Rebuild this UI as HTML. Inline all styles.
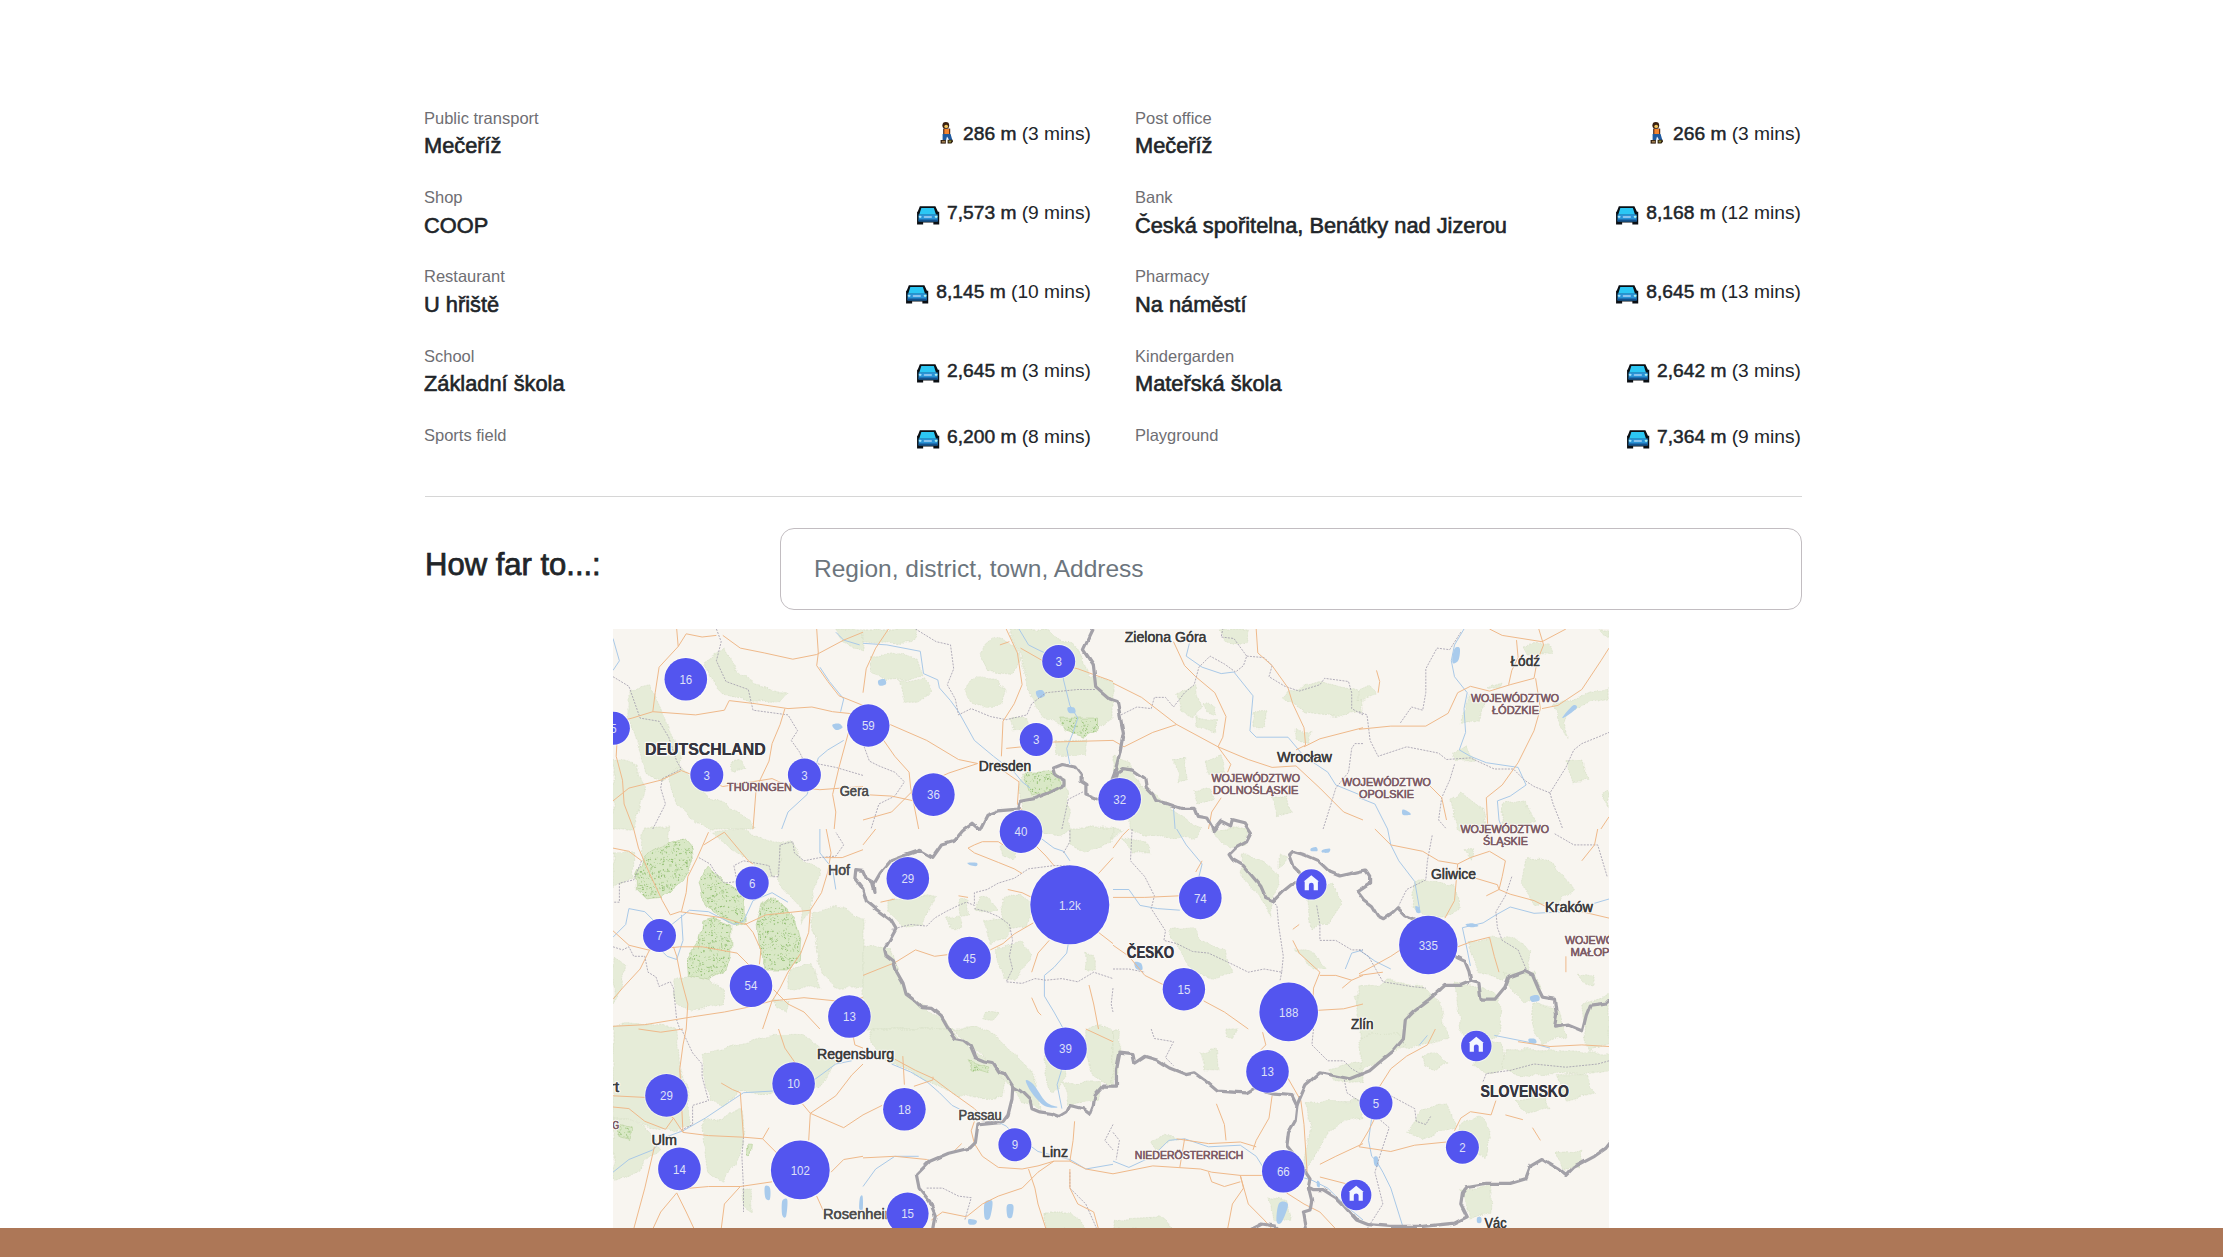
<!DOCTYPE html>
<html><head><meta charset="utf-8">
<style>
html,body{margin:0;padding:0;background:#fff;width:2223px;height:1257px;overflow:hidden;position:relative;font-family:"Liberation Sans",sans-serif;color:#212529}
.a{position:absolute;white-space:nowrap}
.lbl{font-size:16.5px;line-height:16.5px;color:#6e6e73}
.nm{font-size:21.8px;line-height:21.8px;font-weight:400;color:#212529;-webkit-text-stroke:0.6px #212529}
.ds{font-size:19.2px;line-height:19.2px;color:#212529;text-align:right}
.ds b{font-weight:400;-webkit-text-stroke:0.5px #212529}
.car{display:inline-block;vertical-align:-5.8px;margin-right:6.5px;margin-top:-8px}
.walk{display:inline-block;vertical-align:-4px;margin-right:9px;margin-top:-8px}
#sep{position:absolute;left:425px;top:496px;width:1377px;height:1px;background:#d6d6d6}
#hfar{font-size:31px;line-height:31px;font-weight:400;color:#212529;-webkit-text-stroke:0.75px #212529}
#inp{position:absolute;left:780px;top:528px;width:1020px;height:80px;border:1px solid #c2bdc1;border-radius:14px;box-sizing:content-box}
#ph{font-size:24.5px;line-height:24.5px;color:#6c757d}
#map{position:absolute;left:613px;top:629px;width:996px;height:599px;overflow:hidden;background:#f5f2ee}
#brown{position:absolute;left:0;top:1228px;width:2223px;height:29px;background:#ad7757}
</style></head><body>
<div class="a lbl" style="left:424px;top:110.03px">Public transport</div>
<div class="a nm" style="left:424px;top:135.35px">Mečeříž</div>
<div class="a ds" style="right:1132px;top:123.75px"><svg class="walk" width="14" height="23" viewBox="0 0 14 23"><circle cx="5.8" cy="4.4" r="3.4" fill="#3a2112"/><ellipse cx="6.2" cy="5.4" rx="1.9" ry="1.6" fill="#f2c65e"/><path d="M3.2 7.6H10.2V13.4H3.2Z" fill="#3a1a10"/><path d="M4.3 8.0H9.2V13.2H4.3Z" fill="#f5842e"/><path d="M2.6 13.0H10.6L12.4 19.2H9.4L7.0 15.6L6.0 19.4H2.6Z" fill="#1f5aa0"/><path d="M0.6 19.0H5.8V22.6H0.6Z" fill="#2a1808"/><path d="M1.8 19.8H5.0V21.6H1.8Z" fill="#a07d50"/><path d="M7.6 18.8H12.6L13.0 20.4L11.4 22.4H7.6Z" fill="#2a1808"/><path d="M8.6 19.4H11.6L10.8 21.4H8.6Z" fill="#8a8a3a"/></svg><b>286 m</b> (3 mins)</div>
<div class="a lbl" style="left:424px;top:189.23px">Shop</div>
<div class="a nm" style="left:424px;top:214.55px">COOP</div>
<div class="a ds" style="right:1132px;top:202.95px"><svg class="car" width="24.5" height="19" viewBox="0 0 23 18" preserveAspectRatio="none"><path d="M3.6 0.3H18.2L20.6 5.4H21.8V17.6H16.3V15.6H6.7V17.6H1.0V5.4H1.6Z" fill="#0b0f14"/><path d="M5.0 1.8H16.8L18.8 8.2H3.0Z" fill="#2cc7f4"/><path d="M2.4 8.0H20.4V14.6H2.4Z" fill="#2a93d6"/><path d="M2.4 12.8H20.4V14.6H2.4Z" fill="#14528f"/><ellipse cx="3.9" cy="10.3" rx="1.4" ry="1.0" fill="#9fe3fa"/><ellipse cx="18.9" cy="10.3" rx="1.4" ry="1.0" fill="#a8f0f0"/><rect x="7.2" y="9.6" width="7.8" height="1.5" rx="0.7" fill="#a9d4f6"/></svg><b>7,573 m</b> (9 mins)</div>
<div class="a lbl" style="left:424px;top:268.43px">Restaurant</div>
<div class="a nm" style="left:424px;top:293.75px">U hřiště</div>
<div class="a ds" style="right:1132px;top:282.15px"><svg class="car" width="24.5" height="19" viewBox="0 0 23 18" preserveAspectRatio="none"><path d="M3.6 0.3H18.2L20.6 5.4H21.8V17.6H16.3V15.6H6.7V17.6H1.0V5.4H1.6Z" fill="#0b0f14"/><path d="M5.0 1.8H16.8L18.8 8.2H3.0Z" fill="#2cc7f4"/><path d="M2.4 8.0H20.4V14.6H2.4Z" fill="#2a93d6"/><path d="M2.4 12.8H20.4V14.6H2.4Z" fill="#14528f"/><ellipse cx="3.9" cy="10.3" rx="1.4" ry="1.0" fill="#9fe3fa"/><ellipse cx="18.9" cy="10.3" rx="1.4" ry="1.0" fill="#a8f0f0"/><rect x="7.2" y="9.6" width="7.8" height="1.5" rx="0.7" fill="#a9d4f6"/></svg><b>8,145 m</b> (10 mins)</div>
<div class="a lbl" style="left:424px;top:347.63px">School</div>
<div class="a nm" style="left:424px;top:372.95px">Základní škola</div>
<div class="a ds" style="right:1132px;top:361.35px"><svg class="car" width="24.5" height="19" viewBox="0 0 23 18" preserveAspectRatio="none"><path d="M3.6 0.3H18.2L20.6 5.4H21.8V17.6H16.3V15.6H6.7V17.6H1.0V5.4H1.6Z" fill="#0b0f14"/><path d="M5.0 1.8H16.8L18.8 8.2H3.0Z" fill="#2cc7f4"/><path d="M2.4 8.0H20.4V14.6H2.4Z" fill="#2a93d6"/><path d="M2.4 12.8H20.4V14.6H2.4Z" fill="#14528f"/><ellipse cx="3.9" cy="10.3" rx="1.4" ry="1.0" fill="#9fe3fa"/><ellipse cx="18.9" cy="10.3" rx="1.4" ry="1.0" fill="#a8f0f0"/><rect x="7.2" y="9.6" width="7.8" height="1.5" rx="0.7" fill="#a9d4f6"/></svg><b>2,645 m</b> (3 mins)</div>
<div class="a lbl" style="left:424px;top:426.83px">Sports field</div>
<div class="a ds" style="right:1132px;top:427.25px"><svg class="car" width="24.5" height="19" viewBox="0 0 23 18" preserveAspectRatio="none"><path d="M3.6 0.3H18.2L20.6 5.4H21.8V17.6H16.3V15.6H6.7V17.6H1.0V5.4H1.6Z" fill="#0b0f14"/><path d="M5.0 1.8H16.8L18.8 8.2H3.0Z" fill="#2cc7f4"/><path d="M2.4 8.0H20.4V14.6H2.4Z" fill="#2a93d6"/><path d="M2.4 12.8H20.4V14.6H2.4Z" fill="#14528f"/><ellipse cx="3.9" cy="10.3" rx="1.4" ry="1.0" fill="#9fe3fa"/><ellipse cx="18.9" cy="10.3" rx="1.4" ry="1.0" fill="#a8f0f0"/><rect x="7.2" y="9.6" width="7.8" height="1.5" rx="0.7" fill="#a9d4f6"/></svg><b>6,200 m</b> (8 mins)</div>
<div class="a lbl" style="left:1135px;top:110.03px">Post office</div>
<div class="a nm" style="left:1135px;top:135.35px">Mečeříž</div>
<div class="a ds" style="right:422px;top:123.75px"><svg class="walk" width="14" height="23" viewBox="0 0 14 23"><circle cx="5.8" cy="4.4" r="3.4" fill="#3a2112"/><ellipse cx="6.2" cy="5.4" rx="1.9" ry="1.6" fill="#f2c65e"/><path d="M3.2 7.6H10.2V13.4H3.2Z" fill="#3a1a10"/><path d="M4.3 8.0H9.2V13.2H4.3Z" fill="#f5842e"/><path d="M2.6 13.0H10.6L12.4 19.2H9.4L7.0 15.6L6.0 19.4H2.6Z" fill="#1f5aa0"/><path d="M0.6 19.0H5.8V22.6H0.6Z" fill="#2a1808"/><path d="M1.8 19.8H5.0V21.6H1.8Z" fill="#a07d50"/><path d="M7.6 18.8H12.6L13.0 20.4L11.4 22.4H7.6Z" fill="#2a1808"/><path d="M8.6 19.4H11.6L10.8 21.4H8.6Z" fill="#8a8a3a"/></svg><b>266 m</b> (3 mins)</div>
<div class="a lbl" style="left:1135px;top:189.23px">Bank</div>
<div class="a nm" style="left:1135px;top:214.55px">Česká spořitelna, Benátky nad Jizerou</div>
<div class="a ds" style="right:422px;top:202.95px"><svg class="car" width="24.5" height="19" viewBox="0 0 23 18" preserveAspectRatio="none"><path d="M3.6 0.3H18.2L20.6 5.4H21.8V17.6H16.3V15.6H6.7V17.6H1.0V5.4H1.6Z" fill="#0b0f14"/><path d="M5.0 1.8H16.8L18.8 8.2H3.0Z" fill="#2cc7f4"/><path d="M2.4 8.0H20.4V14.6H2.4Z" fill="#2a93d6"/><path d="M2.4 12.8H20.4V14.6H2.4Z" fill="#14528f"/><ellipse cx="3.9" cy="10.3" rx="1.4" ry="1.0" fill="#9fe3fa"/><ellipse cx="18.9" cy="10.3" rx="1.4" ry="1.0" fill="#a8f0f0"/><rect x="7.2" y="9.6" width="7.8" height="1.5" rx="0.7" fill="#a9d4f6"/></svg><b>8,168 m</b> (12 mins)</div>
<div class="a lbl" style="left:1135px;top:268.43px">Pharmacy</div>
<div class="a nm" style="left:1135px;top:293.75px">Na náměstí</div>
<div class="a ds" style="right:422px;top:282.15px"><svg class="car" width="24.5" height="19" viewBox="0 0 23 18" preserveAspectRatio="none"><path d="M3.6 0.3H18.2L20.6 5.4H21.8V17.6H16.3V15.6H6.7V17.6H1.0V5.4H1.6Z" fill="#0b0f14"/><path d="M5.0 1.8H16.8L18.8 8.2H3.0Z" fill="#2cc7f4"/><path d="M2.4 8.0H20.4V14.6H2.4Z" fill="#2a93d6"/><path d="M2.4 12.8H20.4V14.6H2.4Z" fill="#14528f"/><ellipse cx="3.9" cy="10.3" rx="1.4" ry="1.0" fill="#9fe3fa"/><ellipse cx="18.9" cy="10.3" rx="1.4" ry="1.0" fill="#a8f0f0"/><rect x="7.2" y="9.6" width="7.8" height="1.5" rx="0.7" fill="#a9d4f6"/></svg><b>8,645 m</b> (13 mins)</div>
<div class="a lbl" style="left:1135px;top:347.63px">Kindergarden</div>
<div class="a nm" style="left:1135px;top:372.95px">Mateřská škola</div>
<div class="a ds" style="right:422px;top:361.35px"><svg class="car" width="24.5" height="19" viewBox="0 0 23 18" preserveAspectRatio="none"><path d="M3.6 0.3H18.2L20.6 5.4H21.8V17.6H16.3V15.6H6.7V17.6H1.0V5.4H1.6Z" fill="#0b0f14"/><path d="M5.0 1.8H16.8L18.8 8.2H3.0Z" fill="#2cc7f4"/><path d="M2.4 8.0H20.4V14.6H2.4Z" fill="#2a93d6"/><path d="M2.4 12.8H20.4V14.6H2.4Z" fill="#14528f"/><ellipse cx="3.9" cy="10.3" rx="1.4" ry="1.0" fill="#9fe3fa"/><ellipse cx="18.9" cy="10.3" rx="1.4" ry="1.0" fill="#a8f0f0"/><rect x="7.2" y="9.6" width="7.8" height="1.5" rx="0.7" fill="#a9d4f6"/></svg><b>2,642 m</b> (3 mins)</div>
<div class="a lbl" style="left:1135px;top:426.83px">Playground</div>
<div class="a ds" style="right:422px;top:427.25px"><svg class="car" width="24.5" height="19" viewBox="0 0 23 18" preserveAspectRatio="none"><path d="M3.6 0.3H18.2L20.6 5.4H21.8V17.6H16.3V15.6H6.7V17.6H1.0V5.4H1.6Z" fill="#0b0f14"/><path d="M5.0 1.8H16.8L18.8 8.2H3.0Z" fill="#2cc7f4"/><path d="M2.4 8.0H20.4V14.6H2.4Z" fill="#2a93d6"/><path d="M2.4 12.8H20.4V14.6H2.4Z" fill="#14528f"/><ellipse cx="3.9" cy="10.3" rx="1.4" ry="1.0" fill="#9fe3fa"/><ellipse cx="18.9" cy="10.3" rx="1.4" ry="1.0" fill="#a8f0f0"/><rect x="7.2" y="9.6" width="7.8" height="1.5" rx="0.7" fill="#a9d4f6"/></svg><b>7,364 m</b> (9 mins)</div>
<div id="sep"></div>
<div class="a" id="hfar" style="left:425px;top:549.2px">How far to...:</div>
<div id="inp"></div>
<div class="a" id="ph" style="left:814px;top:557.3px">Region, district, town, Address</div>
<div id="map"><svg width="996" height="599" viewBox="613 629 996 599" style="display:block;font-family:'Liberation Sans',sans-serif">
<rect x="613" y="629" width="996" height="599" fill="#f8f5f0"/>
<defs><pattern id="spk" width="24" height="24" patternUnits="userSpaceOnUse"><rect width="24" height="24" fill="#d9e8c6"/><g fill="#7fb35a" opacity="0.75"><circle cx="7.8" cy="3.6" r="0.64"/><circle cx="1.7" cy="12.9" r="0.51"/><circle cx="1.4" cy="12.2" r="0.37"/><circle cx="10.4" cy="1.7" r="0.39"/><circle cx="10.2" cy="19.8" r="0.41"/><circle cx="5.4" cy="15.1" r="0.78"/><circle cx="13.9" cy="9.5" r="0.79"/><circle cx="1.1" cy="20.6" r="0.48"/><circle cx="3.5" cy="2.8" r="0.49"/><circle cx="19.6" cy="4.3" r="0.61"/><circle cx="15.3" cy="8.9" r="0.60"/><circle cx="1.5" cy="1.4" r="0.44"/><circle cx="16.3" cy="10.3" r="0.49"/><circle cx="14.1" cy="10.9" r="0.48"/><circle cx="19.1" cy="16.8" r="0.46"/><circle cx="13.8" cy="12.6" r="0.74"/><circle cx="17.5" cy="6.9" r="0.79"/><circle cx="2.8" cy="10.0" r="0.69"/><circle cx="3.6" cy="11.7" r="0.37"/><circle cx="16.0" cy="18.3" r="0.61"/><circle cx="21.0" cy="7.5" r="0.66"/><circle cx="14.3" cy="13.9" r="0.56"/><circle cx="20.2" cy="22.7" r="0.56"/><circle cx="15.9" cy="1.5" r="0.67"/><circle cx="15.5" cy="23.8" r="0.72"/><circle cx="6.8" cy="9.3" r="0.65"/><circle cx="0.5" cy="11.1" r="0.43"/><circle cx="2.8" cy="1.4" r="0.70"/><circle cx="3.1" cy="5.9" r="0.53"/><circle cx="20.9" cy="1.9" r="0.55"/><circle cx="13.2" cy="21.2" r="0.72"/><circle cx="20.7" cy="6.7" r="0.54"/><circle cx="8.6" cy="21.2" r="0.78"/><circle cx="3.6" cy="4.2" r="0.45"/><circle cx="5.6" cy="11.6" r="0.62"/><circle cx="6.3" cy="0.1" r="0.54"/><circle cx="8.9" cy="13.6" r="0.78"/><circle cx="16.6" cy="12.4" r="0.63"/><circle cx="16.2" cy="1.3" r="0.75"/><circle cx="18.7" cy="21.0" r="0.71"/><circle cx="9.4" cy="9.6" r="0.40"/><circle cx="15.2" cy="1.5" r="0.38"/><circle cx="5.0" cy="3.9" r="0.50"/><circle cx="1.3" cy="0.0" r="0.42"/><circle cx="2.4" cy="8.7" r="0.36"/><circle cx="21.0" cy="14.7" r="0.42"/><circle cx="6.1" cy="8.3" r="0.51"/><circle cx="2.9" cy="20.4" r="0.80"/><circle cx="11.2" cy="11.6" r="0.39"/><circle cx="2.5" cy="8.2" r="0.47"/><circle cx="19.9" cy="3.9" r="0.36"/><circle cx="22.8" cy="12.7" r="0.42"/><circle cx="13.0" cy="0.6" r="0.59"/><circle cx="23.5" cy="20.7" r="0.66"/><circle cx="6.3" cy="8.8" r="0.43"/><circle cx="18.5" cy="12.8" r="0.70"/><circle cx="7.9" cy="5.4" r="0.72"/><circle cx="23.6" cy="20.5" r="0.71"/><circle cx="19.6" cy="17.8" r="0.45"/><circle cx="12.4" cy="8.5" r="0.36"/><circle cx="0.7" cy="6.7" r="0.47"/><circle cx="16.6" cy="23.0" r="0.55"/><circle cx="22.5" cy="23.7" r="0.78"/><circle cx="8.8" cy="5.3" r="0.45"/><circle cx="4.7" cy="4.9" r="0.63"/><circle cx="21.6" cy="20.2" r="0.57"/><circle cx="15.7" cy="19.2" r="0.39"/><circle cx="15.9" cy="21.8" r="0.70"/><circle cx="18.0" cy="11.5" r="0.43"/><circle cx="18.9" cy="8.0" r="0.71"/></g></pattern><filter id="wob" x="-5%" y="-5%" width="110%" height="110%"><feTurbulence type="fractalNoise" baseFrequency="0.06" numOctaves="2" seed="3"/><feDisplacementMap in="SourceGraphic" scale="9" xChannelSelector="R" yChannelSelector="G"/></filter></defs>
<g filter="url(#wob)"><g fill="#e6ecd8" stroke="#d5ddc4" stroke-width="0.6" stroke-dasharray="2 1"><polygon points="628.9,689.5 649.6,684.7 660.7,708.6 668.7,732.4 679.8,756.3 681.4,772.2 660.7,780.2 644.8,772.2 636.9,740.4 628.9,716.5"/><polygon points="705.3,660.8 724.4,648.1 740.3,676.7 756.2,683.1 788.0,692.7 780.1,700.6 751.4,702.2 724.4,692.7 708.5,676.7"/><polygon points="679.8,765.9 708.5,796.1 740.3,812.0 756.2,829.0 708.5,829.0 676.7,804.0 668.7,780.2"/><polygon points="835.8,629.0 863.0,629.0 863.0,651.3 843.7,641.7"/><polygon points="729.2,762.7 740.3,761.1 745.1,769.0 733.9,772.2"/><polygon points="613.0,759.5 636.9,765.9 644.8,788.1 632.1,829.0 613.0,829.0"/><polygon points="872.5,657.6 891.6,652.9 917.1,659.2 921.9,673.6 902.8,679.9 886.9,681.5 872.5,670.4"/><polygon points="899.6,681.5 923.5,676.7 931.4,692.7 918.7,702.2 904.4,702.2"/><polygon points="964.8,689.5 974.4,676.7 995.1,678.3 1006.2,691.1 1003.0,703.8 987.1,708.6 971.2,702.2"/><polygon points="980.8,651.3 995.1,638.5 1014.2,643.3 1019.0,660.8 1014.2,673.6 987.1,670.4"/><polygon points="1011.0,629.0 1046.0,629.0 1077.8,648.1 1089.0,676.7 1113.0,681.5 1113.0,718.1 1098.5,727.7 1069.9,730.8 1042.8,716.5 1031.7,695.8 1022.1,667.2"/><polygon points="1020.5,772.2 1046.0,772.2 1065.1,780.2 1069.9,829.0 1061.9,835.9 1038.0,832.7 1022.1,829.0"/><polygon points="1011.0,718.1 1025.3,718.1 1028.5,729.3 1014.2,730.8"/><polygon points="1054.0,740.4 1089.0,740.4 1085.8,756.3 1057.1,756.3"/><polygon points="863.0,629.0 918.7,629.0 910.7,641.7 878.9,643.3 863.0,641.7"/><polygon points="1176.7,695.8 1195.7,684.7 1200.5,708.6 1192.6,718.1 1181.4,711.7"/><polygon points="1195.7,716.5 1216.4,721.3 1216.4,732.4 1197.3,726.1"/><polygon points="1202.1,705.4 1214.8,707.0 1216.4,714.9 1203.7,711.7"/><polygon points="1253.0,711.7 1265.8,711.7 1265.8,727.7 1253.0,727.7"/><polygon points="1281.7,697.4 1292.8,689.5 1319.9,681.5 1351.7,689.5 1363.0,692.7 1363.0,711.7 1335.8,716.5 1304.0,711.7 1288.0,702.2"/><polygon points="1205.3,761.1 1221.2,757.9 1224.4,772.2 1208.5,772.2"/><polygon points="1173.5,759.5 1184.6,759.5 1186.2,780.2 1176.7,781.8"/><polygon points="1192.6,789.7 1208.5,786.5 1214.8,800.9 1198.9,804.0"/><polygon points="1141.6,788.1 1157.6,796.1 1176.7,812.0 1202.1,829.0 1192.6,839.1 1144.8,835.9 1128.9,829.0 1128.9,804.0"/><polygon points="1272.1,796.1 1288.0,796.1 1291.2,812.0 1276.9,816.8"/><polygon points="1221.2,629.0 1248.3,629.0 1245.1,644.9 1224.4,641.7"/><polygon points="1296.0,730.8 1311.9,730.8 1308.7,743.6 1296.0,740.4"/><polygon points="1113.0,756.3 1128.9,761.1 1141.6,788.1 1122.5,804.0 1113.0,788.1"/><polygon points="1359.0,689.5 1371.7,684.7 1378.1,695.8 1359.0,700.6"/><polygon points="1459.3,724.5 1468.8,695.8 1483.1,703.8 1479.9,719.7"/><polygon points="1451.3,753.1 1467.2,746.8 1473.6,761.1 1454.5,762.7"/><polygon points="1522.9,644.9 1550.0,641.7 1553.1,654.5 1526.1,652.9"/><polygon points="1486.3,687.9 1502.2,683.1 1499.0,689.5"/><polygon points="1553.1,705.4 1581.8,695.8 1609.0,687.9 1609.0,697.4 1565.9,711.7 1565.9,740.4"/><polygon points="1449.7,799.3 1462.4,792.9 1483.1,808.8 1486.3,829.0 1457.7,829.0"/><polygon points="1502.2,804.0 1526.1,800.9 1534.0,820.0 1518.1,829.0 1502.2,829.0"/><polygon points="1565.9,759.5 1581.8,761.1 1588.2,780.2 1573.8,781.8"/><polygon points="1600.9,792.9 1609.0,789.7 1609.0,807.2"/><polygon points="1597.7,629.0 1609.0,629.0 1609.0,638.5"/><polygon points="643.2,829.0 668.7,829.0 667.1,841.7 644.8,856.1 641.6,860.8"/><polygon points="613.0,852.9 633.7,852.9 633.7,876.7 613.0,886.3"/><polygon points="711.7,832.2 740.3,829.0 780.1,844.9 778.5,876.7 764.2,876.7 748.3,860.8 724.4,844.9"/><polygon points="780.1,844.9 792.8,841.7 804.0,860.8 819.9,868.8 810.3,908.6 804.0,924.5 800.8,908.6 778.5,884.7"/><polygon points="811.9,911.7 835.8,905.4 863.0,918.1 863.0,988.1 835.8,988.1 819.9,972.2 815.1,940.4"/><polygon points="613.0,956.3 625.7,964.3 622.5,988.1 613.0,1004.0"/><polygon points="673.5,980.2 689.4,975.4 708.5,980.2 724.4,988.1 724.4,1004.0 692.6,1012.0 676.7,1004.0"/><polygon points="788.0,969.0 811.9,964.3 819.9,988.1 788.0,988.1"/><polygon points="772.1,1000.9 791.2,1000.9 788.0,1010.4 776.9,1008.8"/><polygon points="886.9,900.6 926.7,895.8 934.6,897.4 923.5,924.5 902.8,927.7 886.9,911.7"/><polygon points="863.0,945.2 891.6,946.8 902.8,988.1 918.7,1004.0 942.6,1020.0 952.1,1029.0 863.0,1029.0"/><polygon points="980.8,895.8 990.3,897.4 998.3,908.6 974.4,911.7"/><polygon points="982.4,921.3 1006.2,918.1 1012.6,930.8 1006.2,940.4 990.3,943.6"/><polygon points="995.1,949.9 1022.1,940.4 1030.1,956.3 1014.2,980.2 1003.0,980.2"/><polygon points="1001.4,899.0 1022.1,892.7 1031.7,905.4 1028.5,927.7 1011.0,930.8 1003.0,916.5"/><polygon points="1069.9,829.0 1113.0,829.0 1113.0,841.7 1085.8,852.9 1069.9,844.9"/><polygon points="945.7,918.1 958.5,914.9 961.7,927.7 948.9,927.7"/><polygon points="958.5,900.6 968.0,899.0 969.6,914.9 960.1,916.5"/><polygon points="1085.8,953.1 1095.3,953.1 1095.3,969.0 1085.8,967.4"/><polygon points="983.9,1012.0 998.3,1013.6 993.5,1021.6 983.9,1020.0"/><polygon points="999.9,844.9 1015.8,848.1 1012.6,860.8 1003.0,859.2"/><polygon points="1168.7,930.8 1192.6,927.7 1202.1,940.4 1224.4,949.9 1230.8,972.2 1216.4,978.6 1192.6,972.2 1179.8,953.1"/><polygon points="1240.3,852.9 1264.2,860.8 1280.1,876.7 1269.0,900.6 1272.1,916.5 1256.2,892.7 1240.3,873.6"/><polygon points="1307.1,895.8 1332.6,883.1 1340.6,905.4 1327.8,924.5 1311.9,927.7"/><polygon points="1211.7,829.0 1248.3,829.0 1246.7,844.9 1227.6,848.1 1214.8,838.5"/><polygon points="1122.5,835.4 1144.8,841.7 1151.2,852.9 1132.1,852.9"/><polygon points="1294.4,949.9 1311.9,949.9 1324.6,969.0 1313.5,969.0"/><polygon points="1280.1,852.9 1288.0,857.6 1280.1,868.8"/><polygon points="1113.0,829.0 1122.5,829.0 1113.0,838.5"/><polygon points="1354.9,997.7 1363.0,994.5 1363.0,1013.6"/><polygon points="1414.7,881.5 1430.6,879.9 1454.5,886.3 1460.8,908.6 1448.1,914.9 1425.8,918.1 1413.1,908.6"/><polygon points="1467.2,943.6 1494.3,937.2 1518.1,940.4 1530.9,949.9 1526.1,972.2 1502.2,980.2 1478.4,972.2"/><polygon points="1526.1,857.6 1550.0,860.8 1565.9,876.7 1573.8,889.5 1556.3,903.8 1534.0,905.4 1521.3,884.7"/><polygon points="1359.0,988.1 1390.8,981.8 1422.7,985.0 1441.7,1004.0 1448.1,1039.1 1406.7,1048.6 1359.0,1035.9"/><polygon points="1454.5,981.8 1486.3,988.1 1502.2,1004.0 1499.0,1035.9 1470.4,1043.8 1460.8,1029.0"/><polygon points="1502.2,972.2 1534.0,972.2 1542.0,996.1 1526.1,1004.0 1510.2,988.1"/><polygon points="1578.6,972.2 1597.7,975.4 1594.5,985.0 1581.8,981.8"/><polygon points="1534.0,1004.0 1557.9,1012.0 1565.9,1035.9 1542.0,1043.8 1530.9,1027.9"/><polygon points="1581.8,1004.0 1609.0,996.1 1609.0,1043.8 1589.7,1051.8 1585.0,1035.9"/><polygon points="1464.0,849.7 1473.6,849.7 1470.4,859.2"/><polygon points="613.0,1029.0 625.7,1022.6 652.8,1025.8 676.7,1029.0 679.8,1068.8 689.4,1100.6 689.4,1124.5 673.5,1130.8 644.8,1127.7 628.9,1118.1 613.0,1118.1"/><polygon points="702.1,1054.5 724.4,1048.1 772.1,1035.4 804.0,1035.4 835.8,1060.8 819.9,1089.5 772.1,1092.7 740.3,1092.7 724.4,1105.4 708.5,1100.6"/><polygon points="702.1,1121.3 724.4,1118.1 740.3,1108.6 743.5,1124.5 740.3,1153.1 724.4,1181.8 708.5,1172.2"/><polygon points="613.0,1118.1 628.9,1118.1 649.6,1132.4 660.7,1149.9 633.7,1172.2 613.0,1180.2"/><polygon points="740.3,1188.1 749.9,1188.1 751.4,1212.0 743.5,1204.0"/><polygon points="871.0,1029.0 950.5,1029.0 966.4,1044.9 990.3,1060.8 1006.2,1081.5 1003.0,1097.4 974.4,1099.0 942.6,1089.5 910.7,1070.4 886.9,1060.8 871.0,1044.9"/><polygon points="952.1,1029.0 990.3,1029.0 1006.2,1044.9 1030.1,1068.8 1038.0,1092.7 1041.2,1108.6 1022.1,1100.6 1006.2,1081.5 982.4,1052.9"/><polygon points="1046.0,1052.9 1061.9,1060.8 1066.7,1076.7 1054.0,1092.7 1042.8,1076.7"/><polygon points="1085.8,1029.0 1098.5,1022.6 1113.0,1029.0 1113.0,1084.7 1093.7,1076.7 1085.8,1052.9"/><polygon points="1061.9,1083.1 1101.7,1081.5 1098.5,1100.6 1069.9,1105.4"/><polygon points="1046.0,1212.0 1069.9,1212.0 1085.8,1229.0 1046.0,1229.0"/><polygon points="1200.5,1052.9 1216.4,1048.1 1218.0,1068.8 1205.3,1068.8"/><polygon points="1304.0,1105.4 1327.8,1100.6 1363.0,1100.6 1363.0,1116.5 1335.8,1124.5 1319.9,1148.4 1304.0,1172.2 1304.0,1156.3 1311.9,1124.5"/><polygon points="1151.2,1140.4 1163.9,1134.0 1176.7,1138.8 1157.6,1149.9"/><polygon points="1327.8,1068.8 1363.0,1060.8 1363.0,1081.5 1335.8,1083.1"/><polygon points="1224.4,1029.0 1235.5,1029.0 1233.9,1038.5 1227.6,1037.0"/><polygon points="1113.0,1221.6 1132.1,1218.4 1160.7,1216.8 1176.7,1229.0 1113.0,1229.0"/><polygon points="1269.0,1196.1 1288.0,1200.9 1291.2,1220.0 1272.1,1223.1"/><polygon points="1113.0,1029.0 1119.4,1029.0 1117.8,1076.7 1113.0,1084.7"/><polygon points="1359.0,1035.4 1398.8,1033.8 1403.6,1044.9 1382.9,1060.8 1359.0,1070.4"/><polygon points="1421.1,1057.6 1438.6,1052.9 1448.1,1060.8 1435.4,1070.4 1422.7,1065.6"/><polygon points="1457.7,1124.5 1479.9,1114.9 1491.1,1130.8 1486.3,1156.3 1470.4,1153.1 1459.3,1140.4"/><polygon points="1406.7,1132.4 1422.7,1108.6 1448.1,1103.8 1454.5,1124.5 1422.7,1140.4"/><polygon points="1473.6,1065.6 1486.3,1038.5 1502.2,1044.9 1505.4,1068.8 1486.3,1073.6"/><polygon points="1505.4,1049.7 1550.0,1049.7 1581.8,1052.9 1609.0,1052.9 1609.0,1070.4 1581.8,1076.7 1550.0,1073.6 1518.1,1076.7 1502.2,1068.8"/><polygon points="1515.0,1100.6 1542.0,1095.8 1550.0,1108.6 1526.1,1113.3"/><polygon points="1556.3,1076.7 1589.7,1076.7 1594.5,1092.7 1565.9,1100.6"/><polygon points="1460.8,1188.1 1489.5,1186.5 1491.1,1212.0 1470.4,1220.0"/><polygon points="1557.9,1153.1 1581.8,1149.9 1578.6,1169.0 1562.7,1169.0"/></g>
<g fill="url(#spk)" stroke="#b5cf98" stroke-width="0.6"><polygon points="1058.7,718.1 1098.5,718.1 1098.5,730.8 1085.8,737.2 1065.1,730.8"/><polygon points="1022.1,772.2 1054.0,772.2 1061.9,788.1 1030.1,796.1"/><polygon points="635.3,876.7 644.8,856.1 668.7,841.7 681.4,837.0 691.0,848.1 692.6,860.8 681.4,881.5 660.7,897.4 644.8,899.0 635.3,889.5"/><polygon points="698.9,881.5 708.5,865.6 716.4,873.6 724.4,881.5 737.1,889.5 745.1,897.4 745.1,921.3 733.9,924.5 724.4,918.1 713.3,911.7 702.1,895.8"/><polygon points="756.2,924.5 762.6,903.8 772.1,895.8 788.0,908.6 796.0,921.3 800.8,940.4 799.2,959.5 784.9,969.0 765.8,969.0 759.4,953.1"/><polygon points="687.8,956.3 698.9,940.4 702.1,921.3 714.8,918.1 730.8,924.5 730.8,937.2 730.8,956.3 724.4,972.2 708.5,980.2 689.4,975.4"/><polygon points="746.7,1145.2 751.4,1145.2 749.9,1156.3 746.7,1154.7"/><polygon points="619.4,1124.5 632.1,1127.7 628.9,1140.4 617.8,1137.2"/><polygon points="968.0,1060.8 990.3,1067.2 987.1,1073.6 971.2,1068.8"/></g></g>
<g fill="none" stroke="#a9c9e8" stroke-width="1.0" stroke-linejoin="round"><polyline points="819.9,667.2 829.4,681.5 843.7,699.0 840.6,711.7"/><polyline points="843.7,740.4 827.8,749.9 818.3,757.9 807.1,794.5 788.0,812.0 781.7,829.0"/><polyline points="835.8,632.2 843.7,640.1 859.7,644.9"/><polyline points="613.0,638.5 619.4,660.8 613.0,670.4"/><polyline points="863.0,643.3 886.9,644.9 920.3,651.3 923.5,673.6 937.8,679.9 939.4,687.9 950.5,700.6 958.5,711.7 974.4,740.4 993.5,756.3 1014.2,772.2 1022.1,781.8 1030.1,788.1"/><polyline points="1019.0,629.0 1028.5,644.9 1038.0,649.7 1061.9,660.8 1063.5,679.9 1069.9,705.4 1077.8,718.1 1073.1,732.4 1066.7,748.4 1069.9,764.3"/><polyline points="1189.4,643.3 1186.2,656.1 1202.1,667.2 1221.2,673.6 1233.9,672.0 1253.0,695.8 1249.9,730.8 1256.2,737.2 1288.0,737.2 1304.0,756.3 1327.8,772.2 1335.8,785.0 1363.0,796.1"/><polyline points="1173.5,808.8 1175.1,829.0"/><polyline points="1464.0,629.0 1454.5,644.9 1451.3,660.8 1454.5,676.7 1467.2,692.7 1464.0,708.6 1465.6,732.4 1459.3,749.9 1470.4,756.3 1486.3,762.7 1518.1,767.4 1526.1,785.0 1510.2,796.1 1497.4,800.9 1499.0,820.0 1502.2,829.0"/><polyline points="1359.0,797.7 1374.9,804.0 1387.6,829.0"/><polyline points="613.0,937.2 625.7,924.5 628.9,908.6 644.8,911.7 663.9,930.8 679.8,918.1 689.4,910.2 708.5,911.7 733.9,924.5 743.5,921.3 753.0,900.6 772.1,892.7 788.0,902.2"/><polyline points="681.4,914.9 683.0,940.4 676.7,959.5 667.1,956.3 660.7,949.9"/><polyline points="819.9,829.0 819.9,852.9 832.6,868.8 835.8,889.5"/><polyline points="1068.3,943.6 1066.7,953.1 1054.0,967.4 1044.4,975.4 1044.4,996.1 1054.0,1012.0 1063.5,1029.0"/><polyline points="1041.2,838.5 1054.0,848.1 1063.5,851.3 1069.9,860.8"/><polyline points="1176.7,829.0 1186.2,844.9 1202.1,864.0 1198.9,876.7"/><polyline points="1113.0,889.5 1128.9,889.5 1140.1,905.4 1157.6,908.6 1179.8,910.2"/><polyline points="1345.3,969.0 1351.7,953.1 1363.0,949.9"/><polyline points="1387.6,829.0 1390.8,844.9 1398.8,860.8 1414.7,881.5 1419.5,908.6"/><polyline points="1462.4,927.7 1483.1,922.9 1495.9,914.9 1510.2,907.0 1534.0,913.3 1565.9,911.7 1609.0,899.0"/><polyline points="1462.4,927.7 1467.2,949.9 1470.4,965.9"/><polyline points="1359.0,949.9 1374.9,961.1 1390.8,969.0"/><polyline points="613.0,1172.2 628.9,1159.5 652.8,1149.9 665.5,1137.2 683.0,1130.8 705.3,1118.1 724.4,1105.4 743.5,1092.7 772.1,1091.1 811.9,1081.5 835.8,1064.0 851.7,1060.8"/><polyline points="891.6,1064.0 910.7,1072.0 926.7,1081.5 939.4,1092.7 952.1,1105.4 971.2,1114.9 990.3,1118.1 1006.2,1126.1 1014.2,1134.0 1038.0,1151.5 1069.9,1159.5 1085.8,1169.0 1113.0,1164.3"/><polyline points="863.0,1186.5 875.7,1169.0 894.8,1156.3 918.7,1156.3"/><polyline points="1061.9,1068.8 1057.1,1084.7 1061.9,1108.6"/><polyline points="1113.0,1161.1 1128.9,1167.4 1152.8,1156.3 1168.7,1140.4 1184.6,1138.8 1208.5,1146.8 1240.3,1145.2 1256.2,1156.3 1264.2,1169.0 1284.9,1172.2 1311.9,1180.2 1327.8,1188.1 1343.7,1204.0 1363.0,1220.0"/><polyline points="1371.7,1118.1 1368.5,1140.4 1371.7,1156.3 1376.5,1161.1 1382.9,1172.2 1390.8,1188.1 1403.6,1229.0"/><polyline points="1419.5,1044.9 1427.4,1035.4"/><polyline points="1494.3,1035.4 1526.1,1041.7 1550.0,1048.1"/></g>
<g fill="#a9cbec"><path d="M832.3,724.9C832.7,723.8 837.0,723.2 838.7,723.6C840.3,724.0 842.9,726.4 842.5,727.4C842.0,728.5 837.8,730.4 836.1,730.0C834.4,729.5 831.9,725.9 832.3,724.9Z"/><path d="M878.3,680.4C879.1,679.3 883.4,678.5 884.6,679.1C885.9,679.8 886.8,683.2 885.9,684.2C885.1,685.3 880.8,686.1 879.5,685.5C878.3,684.9 877.4,681.5 878.3,680.4Z"/><path d="M1036.0,691.6C1036.6,690.3 1040.9,689.7 1042.3,690.3C1043.8,691.0 1045.5,694.2 1044.9,695.4C1044.3,696.7 1040.0,698.6 1038.5,698.0C1037.0,697.3 1035.3,692.9 1036.0,691.6Z"/><path d="M1067.6,707.6C1068.5,706.8 1072.7,706.8 1074.0,707.6C1075.3,708.5 1076.1,711.9 1075.3,712.7C1074.4,713.6 1070.2,713.6 1068.9,712.7C1067.6,711.9 1066.8,708.5 1067.6,707.6Z"/><path d="M1454.7,648.4C1456.0,646.7 1459.2,646.4 1459.8,648.4C1460.5,650.3 1459.6,657.3 1458.6,659.8C1457.5,662.4 1454.5,663.8 1453.5,663.6C1452.4,663.4 1452.0,661.1 1452.2,658.5C1452.4,656.0 1453.5,650.0 1454.7,648.4Z"/><path d="M1562.8,716.8C1564.0,714.9 1570.6,706.9 1573.0,705.4C1575.3,703.9 1578.0,706.0 1576.8,707.9C1575.5,709.8 1567.7,715.4 1565.3,716.8C1563.0,718.3 1561.5,718.8 1562.8,716.8Z"/><path d="M1402.8,809.6C1403.9,809.2 1407.9,811.3 1409.2,812.2C1410.5,813.0 1411.5,814.3 1410.5,814.7C1409.4,815.1 1404.1,815.6 1402.8,814.7C1401.6,813.9 1401.8,810.0 1402.8,809.6Z"/><path d="M967.7,862.8C968.8,862.4 975.1,862.2 976.6,862.8C978.1,863.3 977.7,865.5 976.6,866.0C975.6,866.4 971.7,865.9 970.3,865.3C968.8,864.8 966.6,863.2 967.7,862.8Z"/><path d="M1134.6,962.0C1135.5,961.2 1139.7,962.0 1141.0,963.3C1142.3,964.6 1143.1,968.8 1142.3,969.7C1141.4,970.5 1137.2,969.7 1135.9,968.4C1134.6,967.1 1133.8,962.9 1134.6,962.0Z"/><path d="M1311.0,848.3C1311.9,847.7 1315.1,846.6 1316.1,847.1C1317.2,847.5 1318.3,850.2 1317.4,850.9C1316.6,851.5 1312.1,851.3 1311.0,850.9C1310.0,850.5 1310.2,849.0 1311.0,848.3Z"/><path d="M1322.3,849.9C1323.6,849.3 1328.9,848.2 1330.0,848.7C1331.0,849.1 1330.0,851.8 1328.7,852.5C1327.4,853.1 1323.4,852.9 1322.3,852.5C1321.3,852.0 1321.1,850.6 1322.3,849.9Z"/><path d="M1465.6,924.6C1466.0,924.0 1471.1,923.2 1473.3,923.4C1475.4,923.6 1478.8,925.3 1478.4,925.9C1477.9,926.5 1472.8,927.4 1470.7,927.2C1468.6,927.0 1465.2,925.3 1465.6,924.6Z"/><path d="M1415.3,906.3C1415.8,905.4 1418.3,906.5 1419.2,907.5C1420.0,908.6 1420.9,911.8 1420.4,912.6C1420.0,913.5 1417.5,913.7 1416.6,912.6C1415.8,911.6 1414.9,907.1 1415.3,906.3Z"/><path d="M1530.4,996.6C1531.4,995.5 1536.5,994.7 1538.0,995.3C1539.5,995.9 1540.4,999.3 1539.3,1000.4C1538.2,1001.4 1533.1,1002.3 1531.7,1001.7C1530.2,1001.0 1529.3,997.6 1530.4,996.6Z"/><path d="M764.9,1186.5C765.6,1184.8 769.1,1185.7 769.9,1187.8C770.8,1189.9 770.7,1197.6 769.9,1199.3C769.2,1201.0 766.3,1200.1 765.5,1198.0C764.6,1195.9 764.1,1188.2 764.9,1186.5Z"/><path d="M782.2,1201.0C783.1,1198.5 786.7,1197.2 787.3,1199.8C788.0,1202.3 786.9,1213.8 786.1,1216.3C785.2,1218.8 782.9,1217.6 782.2,1215.0C781.6,1212.5 781.4,1203.6 782.2,1201.0Z"/><path d="M860.0,1197.5C860.5,1195.4 862.2,1194.1 862.6,1196.3C863.1,1198.4 863.2,1208.1 862.6,1210.3C862.1,1212.4 859.8,1211.1 859.3,1209.0C858.9,1206.9 859.4,1199.6 860.0,1197.5Z"/><path d="M1025.7,1080.5C1025.9,1079.0 1029.9,1080.7 1033.3,1084.3C1036.7,1087.9 1042.0,1098.3 1046.1,1102.1C1050.1,1106.0 1057.7,1106.6 1057.5,1107.2C1057.3,1107.9 1049.0,1108.3 1044.8,1106.0C1040.5,1103.6 1035.2,1097.5 1032.1,1093.2C1028.9,1089.0 1025.5,1082.0 1025.7,1080.5Z"/><path d="M984.7,1202.7C986.0,1199.9 991.5,1198.9 992.4,1201.4C993.2,1204.0 991.1,1215.2 989.8,1218.0C988.6,1220.7 985.6,1220.5 984.7,1218.0C983.9,1215.4 983.5,1205.5 984.7,1202.7Z"/><path d="M1007.0,1205.5C1007.9,1203.6 1012.5,1203.6 1013.3,1205.5C1014.2,1207.4 1013.0,1215.0 1012.1,1216.9C1011.1,1218.8 1008.5,1218.8 1007.6,1216.9C1006.8,1215.0 1006.0,1207.4 1007.0,1205.5Z"/><path d="M968.9,1219.1C970.2,1218.4 975.5,1219.5 976.5,1220.4C977.6,1221.2 976.5,1223.5 975.3,1224.2C974.0,1224.8 970.0,1225.0 968.9,1224.2C967.8,1223.3 967.6,1219.7 968.9,1219.1Z"/><path d="M1279.1,1203.3C1281.0,1200.5 1287.5,1201.3 1288.0,1204.5C1288.4,1207.7 1283.5,1219.6 1281.6,1222.3C1279.7,1225.1 1276.9,1224.3 1276.5,1221.1C1276.1,1217.9 1277.1,1206.0 1279.1,1203.3Z"/><path d="M1317.0,1181.0C1317.4,1180.3 1319.1,1181.2 1319.6,1182.2C1320.0,1183.3 1320.0,1186.7 1319.6,1187.3C1319.1,1188.0 1317.4,1187.1 1317.0,1186.1C1316.6,1185.0 1316.6,1181.6 1317.0,1181.0Z"/><path d="M1373.9,1157.3C1374.4,1156.1 1377.0,1155.9 1377.7,1157.3C1378.4,1158.8 1378.9,1165.0 1378.3,1166.3C1377.8,1167.5 1375.3,1166.5 1374.5,1165.0C1373.8,1163.5 1373.3,1158.6 1373.9,1157.3Z"/><path d="M1528.6,1039.0C1529.5,1038.4 1533.7,1038.4 1535.0,1039.0C1536.3,1039.7 1537.1,1042.2 1536.3,1042.8C1535.4,1043.5 1531.2,1043.5 1529.9,1042.8C1528.6,1042.2 1527.8,1039.7 1528.6,1039.0Z"/><path d="M1477.2,1217.4C1477.9,1216.6 1480.4,1216.6 1481.1,1217.4C1481.7,1218.3 1481.7,1221.7 1481.1,1222.5C1480.4,1223.4 1477.9,1223.4 1477.2,1222.5C1476.6,1221.7 1476.6,1218.3 1477.2,1217.4Z"/></g>
<g fill="none" stroke="#9f9aab" stroke-width="0.8" stroke-dasharray="2 1.2" stroke-linejoin="round"><polyline points="716.4,629.0 721.2,641.7 716.4,660.8 726.0,681.5 748.3,689.5 753.0,710.2 788.0,714.9 797.6,730.8 791.2,740.4 799.2,751.5 804.0,761.1 835.8,767.4 863.0,775.4"/><polyline points="613.0,676.7 628.9,686.3 640.1,718.1 659.1,721.3 668.7,737.2 676.7,761.1 681.4,769.0 662.3,778.6 660.7,788.1 665.5,804.0 652.8,829.0"/><polyline points="915.5,629.0 936.2,641.7 950.5,644.9 953.7,668.8 947.3,684.7 955.3,699.0 958.5,714.9 971.2,708.6 990.3,716.5 1006.2,719.7 1026.9,714.9 1031.7,703.8 1046.0,692.7 1077.8,689.5 1095.3,689.5"/><polyline points="863.0,743.6 869.4,761.1 878.9,765.9 894.8,772.2 904.4,781.8 894.8,796.1 878.9,804.0 871.0,829.0"/><polyline points="1061.9,829.0 1068.3,799.3 1084.2,791.3"/><polyline points="1121.0,714.9 1136.9,707.0 1151.2,708.6 1154.4,697.4 1165.5,697.4 1173.5,707.0 1184.6,692.7 1194.2,684.7 1198.9,667.2 1210.1,656.1 1224.4,664.0 1235.5,672.0 1243.5,665.6 1246.7,656.1 1233.9,638.5 1221.2,637.0 1222.8,629.0"/><polyline points="1246.7,656.1 1264.2,657.6 1272.1,665.6 1269.0,676.7 1284.9,686.3 1299.2,691.1 1319.9,684.7 1324.6,678.3 1348.5,681.5 1351.7,692.7 1351.7,708.6 1363.0,714.9"/><polyline points="1363.0,743.6 1354.9,743.6 1351.7,748.4 1348.5,772.2 1335.8,788.1 1331.0,804.0 1323.1,829.0"/><polyline points="1359.0,711.7 1367.0,714.9 1370.1,740.4 1378.1,756.3 1406.7,746.8 1438.6,753.1 1446.5,759.5 1470.4,757.9 1494.3,769.0 1513.4,769.0 1524.5,780.2 1534.0,786.5 1550.0,792.9 1557.9,780.2 1565.9,767.4 1573.8,749.9 1581.8,743.6 1597.7,737.2 1609.0,732.4"/><polyline points="1400.4,722.9 1411.5,707.0 1422.7,710.2 1425.8,692.7 1425.8,668.8 1437.0,648.1 1449.7,649.7 1460.8,632.2"/><polyline points="1454.5,764.3 1449.7,780.2 1441.7,797.7 1438.6,820.0 1446.5,829.0"/><polyline points="1550.0,792.9 1553.1,804.0 1559.5,820.0 1562.7,829.0"/><polyline points="641.6,860.8 633.7,879.9 619.4,883.1 619.4,902.2 613.0,902.2"/><polyline points="698.9,857.6 710.1,864.0 718.0,876.7 724.4,883.1 737.1,881.5 733.9,865.6 743.5,860.8 769.0,865.6 772.1,876.7 778.5,876.7 780.1,844.9 792.8,841.7 794.4,852.9 804.0,860.8 819.9,857.6 835.8,856.1 843.7,844.9 835.8,832.2"/><polyline points="613.0,946.8 622.5,949.9 628.9,946.8 633.7,956.3 644.8,956.3 648.0,972.2 656.0,977.0 659.1,986.5 670.3,981.8 673.5,988.1 676.7,1020.0 679.8,1029.0"/><polyline points="891.6,929.3 910.7,924.5 926.7,926.1 934.6,918.1 945.7,911.7 958.5,905.4 966.4,902.2 974.4,905.4 974.4,892.7 987.1,889.5 998.3,883.1 1014.2,878.3 1028.5,868.8 1054.0,865.6 1069.9,865.6"/><polyline points="974.4,908.6 987.1,911.7 998.3,916.5 1009.4,924.5 1012.6,940.4 1009.4,956.3 1012.6,969.0 1006.2,981.8 1022.1,983.4 1034.9,978.6 1046.0,980.2 1061.9,978.6 1077.8,981.8 1093.7,972.2 1113.0,978.6"/><polyline points="1063.5,852.9 1069.9,841.7 1069.9,829.0"/><polyline points="1113.0,988.1 1111.2,1004.0 1113.0,1012.0"/><polyline points="1132.1,829.0 1130.5,860.8 1144.8,876.7 1154.4,895.8 1151.2,908.6 1165.5,930.8 1163.9,940.4 1176.7,943.6 1192.6,951.5 1208.5,953.1 1232.4,964.3 1248.3,972.2 1264.2,969.0 1281.7,972.2 1283.3,956.3 1278.5,924.5 1276.9,905.4 1272.1,902.2"/><polyline points="1316.7,905.4 1319.9,924.5 1319.9,940.4 1335.8,940.4 1351.7,949.9 1363.0,949.9"/><polyline points="1113.0,969.0 1128.9,969.0 1144.8,972.2"/><polyline points="1281.7,972.2 1280.1,980.2"/><polyline points="1432.2,835.4 1427.4,860.8 1425.8,879.9 1406.7,889.5 1398.8,905.4"/><polyline points="1511.8,876.7 1505.4,895.8 1495.9,911.7 1497.4,927.7 1502.2,940.4 1518.1,949.9 1526.1,969.0"/><polyline points="1554.7,833.8 1573.8,844.9 1597.7,844.9 1607.2,876.7"/><polyline points="1359.0,949.9 1368.5,956.3 1382.9,981.8 1411.5,986.5 1425.8,988.1"/><polyline points="681.4,1029.0 692.6,1052.9 702.1,1064.0 702.1,1076.7 708.5,1100.6 692.6,1105.4 692.6,1124.5 679.8,1130.8"/><polyline points="743.5,1137.2 741.9,1156.3 743.5,1188.1 743.5,1212.0"/><polyline points="926.7,1188.1 942.6,1188.1 958.5,1196.1 971.2,1197.7 964.8,1220.0"/><polyline points="1113.0,1124.5 1104.9,1140.4 1113.0,1149.9"/><polyline points="1069.9,1172.2 1069.9,1188.1 1085.8,1204.0 1096.9,1229.0"/><polyline points="1151.2,1029.0 1154.4,1038.5 1173.5,1041.7 1167.1,1054.5 1165.5,1057.6 1173.5,1065.6"/><polyline points="1313.5,1029.0 1311.9,1044.9 1327.8,1060.8 1343.7,1060.8 1351.7,1068.8 1363.0,1075.1"/><polyline points="1113.0,1132.4 1119.4,1140.4 1116.2,1159.5"/><polyline points="1343.7,1076.7 1346.9,1092.7 1363.0,1103.8"/><polyline points="1390.8,1095.8 1414.7,1108.6 1416.3,1121.3 1425.8,1124.5 1430.6,1116.5"/><polyline points="1378.1,1118.1 1389.2,1127.7 1379.7,1156.3 1374.9,1172.2 1382.9,1204.0 1367.0,1229.0"/><polyline points="1483.1,1081.5 1486.3,1073.6 1510.2,1070.4 1534.0,1064.0 1565.9,1067.2 1597.7,1064.0 1609.0,1060.8"/></g>
<g fill="none" stroke="#efb98a" stroke-width="1.0" stroke-linejoin="round"><polyline points="676.7,629.0 678.2,646.5 659.1,667.2 655.2,692.7 652.8,711.7 632.1,718.1 613.0,722.9"/><polyline points="652.8,711.7 695.7,714.9 724.4,710.2 729.2,700.6 756.2,703.8 788.0,708.6 811.9,707.0 832.6,711.7 863.0,714.9"/><polyline points="722.8,635.4 740.3,648.1 764.2,652.9 792.8,659.2 816.7,654.5 843.7,640.1 863.0,632.2"/><polyline points="816.7,629.0 818.3,652.9 816.7,665.6 827.8,681.5 839.0,695.8 863.0,705.4"/><polyline points="784.9,708.6 780.1,724.5 772.1,743.6 769.0,761.1 756.2,788.1 753.0,829.0"/><polyline points="613.0,800.9 628.9,788.1 660.7,780.2 681.4,770.6 722.8,786.5 772.1,778.6 789.6,786.5 819.9,789.7 863.0,786.5"/><polyline points="617.8,727.7 616.2,756.3 622.5,780.2 624.1,804.0 633.7,829.0"/><polyline points="848.5,732.4 839.0,767.4 832.6,794.5 835.8,812.0 834.2,829.0"/><polyline points="678.2,646.5 686.2,633.8 702.1,637.0 716.4,635.4"/><polyline points="888.5,629.0 875.7,648.1 866.2,668.8 863.0,692.7"/><polyline points="890.1,724.5 926.7,740.4 958.5,759.5 977.6,763.5"/><polyline points="977.6,763.5 948.9,773.0 915.5,788.1 891.6,812.0 863.0,820.0"/><polyline points="883.7,740.4 894.8,756.3 909.1,772.2 910.7,788.1 918.7,829.0"/><polyline points="863.0,794.5 891.6,796.1 913.9,800.9"/><polyline points="1001.4,756.3 1003.0,721.3 1014.2,703.8 1022.1,684.7 1017.4,652.9 1006.2,629.0"/><polyline points="1006.2,748.4 1022.1,746.8 1054.0,742.0 1113.0,740.4"/><polyline points="1003.0,770.6 1019.0,781.8 1017.4,804.0 1022.1,810.4"/><polyline points="1020.5,648.1 1042.8,660.8 1077.8,668.8 1113.0,681.5"/><polyline points="999.9,644.9 1009.4,641.7"/><polyline points="1113.0,683.1 1141.6,697.4 1176.7,724.5 1218.0,746.8 1248.3,759.5 1272.1,767.4 1296.0,765.9 1319.9,788.1 1343.7,812.0 1363.0,820.0"/><polyline points="1113.0,740.4 1124.1,746.8 1152.8,732.4 1176.7,724.5"/><polyline points="1173.5,641.7 1184.6,665.6 1195.7,676.7 1214.8,692.7 1226.0,716.5 1222.8,737.2 1218.0,746.8 1230.8,764.3 1227.6,772.2"/><polyline points="1256.2,629.0 1257.8,652.9 1272.1,665.6 1288.0,687.9 1292.8,703.8 1304.0,727.7 1305.6,745.2 1296.0,749.9"/><polyline points="1304.0,746.8 1319.9,738.8 1363.0,727.7"/><polyline points="1221.2,797.7 1211.7,812.0 1208.5,829.0"/><polyline points="1359.0,729.3 1390.8,726.1 1425.8,726.1 1448.1,713.3 1457.7,692.7 1470.4,686.3 1489.5,691.1 1510.2,684.7 1534.0,678.3 1537.2,660.8 1543.6,644.9 1538.8,629.0"/><polyline points="1489.5,629.0 1502.2,635.4 1542.0,641.7 1565.9,629.0"/><polyline points="1535.6,678.3 1540.4,708.6 1534.0,730.8 1518.1,762.7 1502.2,785.0 1486.3,797.7 1487.9,829.0"/><polyline points="1542.0,708.6 1557.9,705.4 1581.8,689.5 1600.9,660.8 1609.0,648.1"/><polyline points="1508.6,684.7 1511.8,670.4 1518.1,657.6 1516.5,640.1"/><polyline points="1376.5,670.4 1379.7,681.5 1378.1,692.7"/><polyline points="1429.0,785.0 1441.7,797.7 1446.5,820.0"/><polyline points="1600.9,829.0 1609.0,816.8"/><polyline points="633.7,829.0 638.5,848.1 649.6,873.6 662.3,900.6 670.3,914.9 679.8,911.7 702.1,914.9 724.4,918.1 745.1,924.5 765.8,914.9 781.7,913.3 810.3,910.2 821.5,892.7 827.8,872.0 831.0,852.9 826.2,829.0"/><polyline points="613.0,930.8 628.9,945.2 648.0,949.9 679.8,946.8 702.1,946.8 737.1,953.1 745.1,961.1 751.4,967.4"/><polyline points="681.4,911.7 686.2,892.7 687.8,876.7 697.3,857.6 708.5,832.2"/><polyline points="649.6,949.9 640.1,969.0 622.5,988.1 613.0,999.3"/><polyline points="673.5,946.8 676.7,956.3 681.4,980.2 687.8,1004.0 686.2,1029.0"/><polyline points="745.1,922.9 753.0,932.4 761.0,949.9 759.4,964.3"/><polyline points="810.3,910.2 808.7,932.4 800.8,953.1 788.0,972.2 780.1,988.1 772.1,1000.9 762.6,1029.0"/><polyline points="613.0,1026.3 644.8,1024.7 692.6,1016.8 724.4,1012.0 748.3,1007.2 772.1,1000.9 804.0,997.7 835.8,1000.9 863.0,997.7"/><polyline points="773.7,989.7 788.0,1004.0 804.0,1012.0 819.9,1029.0"/><polyline points="863.0,849.7 842.2,857.6 824.6,857.6"/><polyline points="703.7,844.9 724.4,832.2 748.3,860.8 753.0,864.0"/><polyline points="613.0,848.1 628.9,851.3 641.6,860.8"/><polyline points="863.0,844.9 875.7,829.0"/><polyline points="968.0,848.1 974.4,844.9 982.4,841.7 998.3,841.7 1003.0,844.9"/><polyline points="968.0,848.1 974.4,852.9 998.3,862.4 1014.2,868.8 1022.1,873.6"/><polyline points="1036.5,846.5 1046.0,856.1 1054.0,865.6"/><polyline points="863.0,975.4 878.9,969.0 894.8,962.7 915.5,949.9 934.6,956.3 947.3,954.7"/><polyline points="990.3,949.9 1003.0,943.6 1014.2,934.0 1033.3,922.9"/><polyline points="1049.2,940.4 1038.0,953.1 1031.7,972.2"/><polyline points="1098.5,932.4 1113.0,943.6"/><polyline points="1098.5,873.6 1113.0,857.6"/><polyline points="1007.8,889.5 1022.1,892.7 1031.7,897.4"/><polyline points="1089.0,985.0 1093.7,1004.0 1098.5,1029.0"/><polyline points="880.5,902.2 894.8,899.0"/><polyline points="1031.7,997.7 1038.0,1012.0 1041.2,1015.2"/><polyline points="958.5,895.8 968.0,897.4"/><polyline points="1113.0,897.4 1144.8,897.4 1179.8,895.8"/><polyline points="1113.0,848.1 1122.5,835.4 1128.9,829.0"/><polyline points="1113.0,945.2 1128.9,956.3 1144.8,975.4 1163.9,985.0"/><polyline points="1203.7,1000.9 1224.4,1012.0 1248.3,1029.0"/><polyline points="1195.7,872.0 1202.1,860.8"/><polyline points="1292.8,940.4 1299.2,953.1 1319.9,972.2 1313.5,988.1 1311.9,1029.0"/><polyline points="1319.9,975.4 1335.8,975.4 1351.7,980.2 1363.0,975.4"/><polyline points="1316.7,1010.4 1343.7,1008.8 1363.0,1004.0"/><polyline points="1342.2,988.1 1351.7,980.2"/><polyline points="1292.8,929.3 1299.2,924.5"/><polyline points="1374.9,829.0 1390.8,844.9 1422.7,851.3 1438.6,860.8 1457.7,864.0 1470.4,857.6 1489.5,851.3 1505.4,860.8 1502.2,876.7 1499.0,889.5 1510.2,894.2 1534.0,900.6 1550.0,908.6 1581.8,911.7 1609.0,918.1"/><polyline points="1457.7,864.0 1454.5,900.6 1444.9,918.1"/><polyline points="1470.4,876.7 1497.4,884.7 1499.0,889.5 1486.3,895.8"/><polyline points="1359.0,973.8 1390.8,956.3 1400.4,949.9"/><polyline points="1457.7,946.8 1470.4,942.0 1489.5,937.2 1494.3,956.3 1499.0,972.2"/><polyline points="1581.8,860.8 1594.5,844.9 1597.7,829.0"/><polyline points="1565.9,956.3 1565.9,972.2"/><polyline points="1359.0,975.4 1382.9,972.2"/><polyline points="613.0,1095.8 644.8,1097.4 673.5,1118.1 683.0,1132.4 708.5,1135.6 743.5,1137.2 762.6,1138.8 776.9,1153.1 781.7,1156.3"/><polyline points="743.5,1137.2 740.3,1092.7 732.4,1089.5 721.2,1083.1"/><polyline points="762.6,1138.8 769.0,1127.7"/><polyline points="613.0,1107.0 628.9,1108.6 644.8,1121.3 665.5,1129.3 673.5,1118.1"/><polyline points="673.5,1189.7 708.5,1186.5 740.3,1186.5 772.1,1181.8"/><polyline points="676.7,1192.9 660.7,1212.0 652.8,1229.0"/><polyline points="676.7,1192.9 686.2,1212.0 694.2,1229.0"/><polyline points="802.4,1103.8 810.3,1113.3 835.8,1095.8 851.7,1075.1 863.0,1064.0"/><polyline points="810.3,1113.3 808.7,1140.4"/><polyline points="810.3,1113.3 843.7,1127.7 863.0,1114.9"/><polyline points="831.0,1172.2 843.7,1159.5 863.0,1156.3"/><polyline points="816.7,1196.1 823.1,1210.4"/><polyline points="778.5,1029.0 784.9,1048.1 796.0,1064.0"/><polyline points="683.0,1132.4 679.8,1068.8 683.0,1044.9 686.2,1029.0"/><polyline points="740.3,1186.5 724.4,1204.0 721.2,1229.0"/><polyline points="654.4,1146.8 644.8,1188.1 633.7,1229.0"/><polyline points="851.7,1029.0 854.9,1044.9 863.0,1048.1"/><polyline points="638.5,1029.0 660.7,1032.2 683.0,1029.0"/><polyline points="863.0,1114.9 882.1,1105.4"/><polyline points="863.0,1157.9 894.8,1156.3 926.7,1159.5 929.8,1161.1"/><polyline points="894.8,1059.2 915.5,1070.4 933.0,1078.3 952.1,1092.7 974.4,1108.6 983.9,1118.1"/><polyline points="913.9,1086.3 933.0,1079.9 933.0,1076.7"/><polyline points="974.4,1143.6 982.4,1156.3 998.3,1167.4 1022.1,1169.0 1038.0,1165.9 1054.0,1161.1 1069.9,1161.1 1085.8,1169.0 1113.0,1173.8"/><polyline points="1028.5,1169.0 1034.9,1188.1 1038.0,1204.0 1046.0,1229.0"/><polyline points="1054.0,1161.1 1038.0,1172.2 1022.1,1188.1 998.3,1196.1 982.4,1204.0 966.4,1216.8 942.6,1212.0 931.4,1220.0"/><polyline points="1069.9,1161.1 1073.1,1140.4 1074.6,1121.3"/><polyline points="1069.9,1169.0 1069.9,1188.1 1077.8,1204.0 1093.7,1212.0 1098.5,1229.0"/><polyline points="902.8,1056.1 904.4,1084.7"/><polyline points="1085.8,1029.0 1113.0,1041.7"/><polyline points="961.7,1143.6 953.7,1151.5"/><polyline points="974.4,1121.3 971.2,1130.8 974.4,1143.6"/><polyline points="1113.0,1173.8 1152.8,1165.9 1200.5,1169.0 1211.7,1172.2 1240.3,1175.4 1272.1,1175.4"/><polyline points="1176.7,1138.8 1208.5,1143.6 1240.3,1142.0 1256.2,1146.8"/><polyline points="1216.4,1103.8 1224.4,1124.5 1226.0,1140.4"/><polyline points="1272.1,1095.8 1269.0,1118.1 1256.2,1140.4 1253.0,1149.9"/><polyline points="1240.3,1175.4 1243.5,1188.1 1232.4,1204.0 1227.6,1229.0"/><polyline points="1240.3,1175.4 1248.3,1204.0 1264.2,1220.0 1272.1,1229.0"/><polyline points="1286.5,1192.9 1304.0,1204.0 1319.9,1212.0 1335.8,1229.0"/><polyline points="1288.0,1078.3 1300.8,1100.6 1304.0,1124.5 1307.1,1172.2"/><polyline points="1319.9,1164.3 1335.8,1156.3 1363.0,1143.6"/><polyline points="1319.9,1177.0 1363.0,1188.1"/><polyline points="1262.6,1032.2 1265.8,1044.9 1261.0,1049.7"/><polyline points="1208.5,1172.2 1211.7,1181.8 1224.4,1186.5 1240.3,1181.8"/><polyline points="1184.6,1138.8 1179.8,1167.4"/><polyline points="1379.7,1086.3 1390.8,1068.8 1406.7,1056.1 1427.4,1044.9 1435.4,1029.0"/><polyline points="1359.0,1146.8 1368.5,1130.8 1374.9,1118.1"/><polyline points="1359.0,1146.8 1390.8,1151.5 1414.7,1145.2 1446.5,1142.0 1462.4,1140.4"/><polyline points="1454.5,1130.8 1460.8,1118.1 1470.4,1111.7 1491.1,1114.9 1495.9,1100.6"/><polyline points="1518.1,1041.7 1550.0,1046.5 1581.8,1044.9 1609.0,1046.5"/><polyline points="1505.4,1114.9 1522.9,1119.7"/><polyline points="1532.5,1127.7 1540.4,1140.4"/></g>
<filter id="jag" x="-2%" y="-2%" width="104%" height="104%"><feTurbulence type="fractalNoise" baseFrequency="0.09" numOctaves="1" seed="11"/><feDisplacementMap in="SourceGraphic" scale="4" xChannelSelector="R" yChannelSelector="G"/></filter>
<g filter="url(#jag)">
<polygon points="855.8,869.6 862.8,870.4 866.3,878.3 872.4,881.8 875.0,891.4 874.1,883.6 880.3,873.0 890.8,860.8 904.8,855.5 920.5,850.3 932.8,857.3 941.5,845.0 953.8,841.5 962.5,831.0 973.0,823.2 980.0,829.3 987.0,815.3 997.6,810.9 1018.6,809.2 1020.3,801.3 1034.3,798.6 1050.0,792.5 1064.0,785.5 1064.0,780.3 1055.3,775.0 1053.6,768.0 1062.3,764.5 1074.8,767.0 1081.1,775.0 1081.1,781.4 1085.9,784.5 1085.9,794.1 1098.6,798.9 1108.0,795.0 1114.0,785.0 1117.7,771.8 1122.5,768.6 1133.6,770.2 1144.8,778.2 1146.4,787.7 1152.7,794.1 1155.9,800.5 1167.0,803.6 1181.4,808.4 1194.1,808.4 1197.3,816.4 1206.8,818.0 1211.6,826.0 1213.2,830.7 1221.2,821.1 1230.7,825.9 1232.3,819.6 1245.0,822.7 1251.4,832.3 1246.6,841.8 1235.5,848.2 1229.1,854.6 1232.3,859.3 1243.4,865.7 1251.4,875.2 1260.9,886.4 1265.7,897.5 1273.7,900.7 1283.2,891.2 1291.2,884.8 1297.5,883.2 1303.0,878.0 1299.1,872.0 1294.3,867.3 1289.6,854.6 1292.8,851.4 1303.9,854.6 1318.2,860.9 1329.8,871.9 1339.7,875.9 1365.6,870.0 1369.6,875.9 1369.6,883.9 1357.6,891.8 1363.6,899.8 1371.5,905.7 1377.5,915.7 1383.5,918.7 1393.4,911.7 1397.4,907.7 1405.4,915.7 1415.3,919.7 1430.0,935.0 1445.0,950.0 1457.0,957.5 1465.0,961.4 1469.0,971.4 1471.0,981.3 1461.0,985.3 1445.1,985.3 1429.2,999.2 1413.3,1011.2 1405.4,1019.1 1403.4,1039.0 1393.4,1050.9 1383.5,1058.9 1369.6,1070.8 1349.7,1078.8 1319.8,1072.8 1305.9,1084.7 1297.0,1105.0 1291.9,1094.5 1272.0,1092.8 1253.8,1087.8 1245.5,1092.8 1217.4,1091.1 1205.8,1081.2 1194.2,1072.9 1186.0,1074.6 1169.4,1068.0 1156.2,1059.7 1144.6,1056.4 1134.7,1063.0 1133.0,1054.7 1119.8,1053.1 1116.5,1069.6 1116.5,1086.2 1102.4,1086.2 1095.0,1094.5 1093.3,1106.0 1090.0,1114.3 1082.8,1108.7 1070.0,1105.5 1066.9,1111.9 1058.9,1116.6 1051.0,1113.5 1039.8,1111.9 1031.9,1108.7 1030.3,1100.7 1020.7,1091.2 1012.8,1086.4 1004.8,1073.7 998.4,1072.0 992.1,1062.5 984.1,1061.0 976.2,1057.8 971.4,1046.6 963.4,1040.3 955.5,1038.7 947.5,1027.5 941.2,1016.4 931.6,1008.4 922.0,1007.6 912.5,998.9 906.1,994.1 903.0,983.0 896.6,971.8 893.4,960.7 886.0,955.0 884.5,949.0 890.0,940.0 896.0,929.0 890.8,920.3 876.8,909.8 866.3,901.0 862.8,888.8 854.9,878.3" fill="none" stroke="#a3a1a8" stroke-width="3.2" stroke-linejoin="round"/>
<polyline points="1093.2,629.0 1083.4,649.6 1093.2,664.4 1095.7,686.6 1110.0,699.0 1117.3,701.4 1123.4,733.4 1119.7,753.1 1114.5,773.4 1110.0,785.0" fill="none" stroke="#a3a1a8" stroke-width="3.2" stroke-linejoin="round"/>
<polyline points="1012.8,1086.4 1012.0,1099.0 1008.0,1115.0 1003.2,1121.4 978.0,1123.8 975.4,1142.6 970.0,1148.0 948.6,1153.3 929.8,1161.3 916.4,1174.8 919.1,1188.2 929.8,1201.6 935.2,1215.0 932.5,1230.0" fill="none" stroke="#a3a1a8" stroke-width="3.2" stroke-linejoin="round"/>
<polyline points="1297.0,1105.0 1295.2,1121.0 1288.5,1132.5 1286.9,1145.7 1293.5,1154.0 1303.4,1168.9 1310.0,1178.8 1308.4,1187.1 1313.5,1189.7 1323.0,1189.7 1335.8,1197.7 1343.7,1205.6 1356.5,1220.0 1368.5,1224.7 1390.8,1226.3 1422.7,1226.3 1454.5,1223.1 1467.2,1216.8 1460.8,1204.0 1462.4,1192.9 1467.2,1186.5 1486.3,1183.4 1510.2,1183.4 1526.1,1178.6 1530.9,1165.9 1542.0,1159.5 1550.0,1164.3 1557.9,1169.0 1565.9,1175.4 1573.8,1167.4 1594.5,1156.3 1605.7,1148.4 1612.0,1140.4" fill="none" stroke="#a3a1a8" stroke-width="3.2" stroke-linejoin="round"/>
<polyline points="1308.4,1187.1 1311.7,1200.3 1310.0,1210.0 1303.4,1212.0 1306.7,1230.0" fill="none" stroke="#a3a1a8" stroke-width="3.2" stroke-linejoin="round"/>
<polyline points="1471.0,981.3 1478.9,983.3 1481.0,999.2 1494.9,999.2 1504.8,987.3 1508.8,977.3 1524.7,971.4 1532.6,975.4 1538.6,989.3 1542.6,997.2 1554.5,999.2 1556.5,1015.1 1554.5,1027.1 1568.4,1025.1 1582.4,1031.0 1586.3,1015.1 1590.3,1005.2 1606.2,1003.2 1612.0,997.2" fill="none" stroke="#a3a1a8" stroke-width="3.2" stroke-linejoin="round"/>
<polyline points="1250.0,1230.0 1262.0,1224.0 1275.0,1226.0 1280.0,1230.0" fill="none" stroke="#a3a1a8" stroke-width="3.2" stroke-linejoin="round"/>
</g>
<text x="1124.7" y="641.5" font-size="14" font-weight="400" fill="#3d3d3d" textLength="81.8" lengthAdjust="spacingAndGlyphs" stroke="#fbfaf7" stroke-width="2.5" paint-order="stroke" stroke-linejoin="round">Zielona Góra</text>
<text x="1124.7" y="641.5" font-size="14" font-weight="400" fill="#3d3d3d" textLength="81.8" lengthAdjust="spacingAndGlyphs" stroke="#3d3d3d" stroke-width="0.35">Zielona Góra</text>
<text x="1510.5" y="665.6" font-size="14" font-weight="400" fill="#3d3d3d" textLength="29.5" lengthAdjust="spacingAndGlyphs" stroke="#fbfaf7" stroke-width="2.5" paint-order="stroke" stroke-linejoin="round">Łódź</text>
<text x="1510.5" y="665.6" font-size="14" font-weight="400" fill="#3d3d3d" textLength="29.5" lengthAdjust="spacingAndGlyphs" stroke="#3d3d3d" stroke-width="0.35">Łódź</text>
<text x="645" y="755.1" font-size="16.5" font-weight="700" fill="#35353f" textLength="120.7" lengthAdjust="spacingAndGlyphs" stroke="#fbfaf7" stroke-width="2.5" paint-order="stroke" stroke-linejoin="round">DEUTSCHLAND</text>
<text x="645" y="755.1" font-size="16.5" font-weight="700" fill="#35353f" textLength="120.7" lengthAdjust="spacingAndGlyphs" stroke="#35353f" stroke-width="0.05">DEUTSCHLAND</text>
<text x="727" y="790.6" font-size="11" font-weight="400" fill="#7d5b65" textLength="64.9" lengthAdjust="spacingAndGlyphs" stroke="#fbfaf7" stroke-width="2.5" paint-order="stroke" stroke-linejoin="round">THÜRINGEN</text>
<text x="727" y="790.6" font-size="11" font-weight="400" fill="#7d5b65" textLength="64.9" lengthAdjust="spacingAndGlyphs" stroke="#7d5b65" stroke-width="0.45">THÜRINGEN</text>
<text x="839.7" y="795.6" font-size="14" font-weight="400" fill="#4d4d4d" textLength="29.1" lengthAdjust="spacingAndGlyphs" stroke="#fbfaf7" stroke-width="2.5" paint-order="stroke" stroke-linejoin="round">Gera</text>
<text x="839.7" y="795.6" font-size="14" font-weight="400" fill="#4d4d4d" textLength="29.1" lengthAdjust="spacingAndGlyphs" stroke="#4d4d4d" stroke-width="0.35">Gera</text>
<text x="978.8" y="770.7" font-size="14" font-weight="400" fill="#3a3a3a" textLength="52.3" lengthAdjust="spacingAndGlyphs" stroke="#fbfaf7" stroke-width="2.5" paint-order="stroke" stroke-linejoin="round">Dresden</text>
<text x="978.8" y="770.7" font-size="14" font-weight="400" fill="#3a3a3a" textLength="52.3" lengthAdjust="spacingAndGlyphs" stroke="#3a3a3a" stroke-width="0.35">Dresden</text>
<text x="828" y="875.2" font-size="14" font-weight="400" fill="#4d4d4d" textLength="22.0" lengthAdjust="spacingAndGlyphs" stroke="#fbfaf7" stroke-width="2.5" paint-order="stroke" stroke-linejoin="round">Hof</text>
<text x="828" y="875.2" font-size="14" font-weight="400" fill="#4d4d4d" textLength="22.0" lengthAdjust="spacingAndGlyphs" stroke="#4d4d4d" stroke-width="0.35">Hof</text>
<text x="1277" y="761.8" font-size="14" font-weight="400" fill="#3d3d3d" textLength="55.0" lengthAdjust="spacingAndGlyphs" stroke="#fbfaf7" stroke-width="2.5" paint-order="stroke" stroke-linejoin="round">Wrocław</text>
<text x="1277" y="761.8" font-size="14" font-weight="400" fill="#3d3d3d" textLength="55.0" lengthAdjust="spacingAndGlyphs" stroke="#3d3d3d" stroke-width="0.35">Wrocław</text>
<text x="1211.4" y="782" font-size="11" font-weight="400" fill="#7d5b65" textLength="88.6" lengthAdjust="spacingAndGlyphs" stroke="#fbfaf7" stroke-width="2.5" paint-order="stroke" stroke-linejoin="round">WOJEWÓDZTWO</text>
<text x="1211.4" y="782" font-size="11" font-weight="400" fill="#7d5b65" textLength="88.6" lengthAdjust="spacingAndGlyphs" stroke="#7d5b65" stroke-width="0.45">WOJEWÓDZTWO</text>
<text x="1213" y="793.8" font-size="11" font-weight="400" fill="#7d5b65" textLength="85.5" lengthAdjust="spacingAndGlyphs" stroke="#fbfaf7" stroke-width="2.5" paint-order="stroke" stroke-linejoin="round">DOLNOŚLĄSKIE</text>
<text x="1213" y="793.8" font-size="11" font-weight="400" fill="#7d5b65" textLength="85.5" lengthAdjust="spacingAndGlyphs" stroke="#7d5b65" stroke-width="0.45">DOLNOŚLĄSKIE</text>
<text x="1342" y="786.4" font-size="11" font-weight="400" fill="#7d5b65" textLength="89.0" lengthAdjust="spacingAndGlyphs" stroke="#fbfaf7" stroke-width="2.5" paint-order="stroke" stroke-linejoin="round">WOJEWÓDZTWO</text>
<text x="1342" y="786.4" font-size="11" font-weight="400" fill="#7d5b65" textLength="89.0" lengthAdjust="spacingAndGlyphs" stroke="#7d5b65" stroke-width="0.45">WOJEWÓDZTWO</text>
<text x="1359" y="798" font-size="11" font-weight="400" fill="#7d5b65" textLength="55.0" lengthAdjust="spacingAndGlyphs" stroke="#fbfaf7" stroke-width="2.5" paint-order="stroke" stroke-linejoin="round">OPOLSKIE</text>
<text x="1359" y="798" font-size="11" font-weight="400" fill="#7d5b65" textLength="55.0" lengthAdjust="spacingAndGlyphs" stroke="#7d5b65" stroke-width="0.45">OPOLSKIE</text>
<text x="1471" y="702" font-size="11" font-weight="400" fill="#7d5b65" textLength="88.0" lengthAdjust="spacingAndGlyphs" stroke="#fbfaf7" stroke-width="2.5" paint-order="stroke" stroke-linejoin="round">WOJEWÓDZTWO</text>
<text x="1471" y="702" font-size="11" font-weight="400" fill="#7d5b65" textLength="88.0" lengthAdjust="spacingAndGlyphs" stroke="#7d5b65" stroke-width="0.45">WOJEWÓDZTWO</text>
<text x="1492" y="713.7" font-size="11" font-weight="400" fill="#7d5b65" textLength="47.0" lengthAdjust="spacingAndGlyphs" stroke="#fbfaf7" stroke-width="2.5" paint-order="stroke" stroke-linejoin="round">ŁÓDZKIE</text>
<text x="1492" y="713.7" font-size="11" font-weight="400" fill="#7d5b65" textLength="47.0" lengthAdjust="spacingAndGlyphs" stroke="#7d5b65" stroke-width="0.45">ŁÓDZKIE</text>
<text x="1460.5" y="832.5" font-size="11" font-weight="400" fill="#7d5b65" textLength="88.5" lengthAdjust="spacingAndGlyphs" stroke="#fbfaf7" stroke-width="2.5" paint-order="stroke" stroke-linejoin="round">WOJEWÓDZTWO</text>
<text x="1460.5" y="832.5" font-size="11" font-weight="400" fill="#7d5b65" textLength="88.5" lengthAdjust="spacingAndGlyphs" stroke="#7d5b65" stroke-width="0.45">WOJEWÓDZTWO</text>
<text x="1483" y="844.9" font-size="11" font-weight="400" fill="#7d5b65" textLength="45.0" lengthAdjust="spacingAndGlyphs" stroke="#fbfaf7" stroke-width="2.5" paint-order="stroke" stroke-linejoin="round">ŚLĄSKIE</text>
<text x="1483" y="844.9" font-size="11" font-weight="400" fill="#7d5b65" textLength="45.0" lengthAdjust="spacingAndGlyphs" stroke="#7d5b65" stroke-width="0.45">ŚLĄSKIE</text>
<text x="1431" y="878.9" font-size="14" font-weight="400" fill="#3d3d3d" textLength="45.0" lengthAdjust="spacingAndGlyphs" stroke="#fbfaf7" stroke-width="2.5" paint-order="stroke" stroke-linejoin="round">Gliwice</text>
<text x="1431" y="878.9" font-size="14" font-weight="400" fill="#3d3d3d" textLength="45.0" lengthAdjust="spacingAndGlyphs" stroke="#3d3d3d" stroke-width="0.35">Gliwice</text>
<text x="1545" y="912" font-size="14" font-weight="400" fill="#3d3d3d" textLength="48.0" lengthAdjust="spacingAndGlyphs" stroke="#fbfaf7" stroke-width="2.5" paint-order="stroke" stroke-linejoin="round">Kraków</text>
<text x="1545" y="912" font-size="14" font-weight="400" fill="#3d3d3d" textLength="48.0" lengthAdjust="spacingAndGlyphs" stroke="#3d3d3d" stroke-width="0.35">Kraków</text>
<text x="1565" y="944" font-size="11" font-weight="400" fill="#7d5b65" textLength="88.0" lengthAdjust="spacingAndGlyphs" stroke="#fbfaf7" stroke-width="2.5" paint-order="stroke" stroke-linejoin="round">WOJEWÓDZTWO</text>
<text x="1565" y="944" font-size="11" font-weight="400" fill="#7d5b65" textLength="88.0" lengthAdjust="spacingAndGlyphs" stroke="#7d5b65" stroke-width="0.45">WOJEWÓDZTWO</text>
<text x="1570.4" y="955.6" font-size="11" font-weight="400" fill="#7d5b65" textLength="79.6" lengthAdjust="spacingAndGlyphs" stroke="#fbfaf7" stroke-width="2.5" paint-order="stroke" stroke-linejoin="round">MAŁOPOLSKIE</text>
<text x="1570.4" y="955.6" font-size="11" font-weight="400" fill="#7d5b65" textLength="79.6" lengthAdjust="spacingAndGlyphs" stroke="#7d5b65" stroke-width="0.45">MAŁOPOLSKIE</text>
<text x="1126.8" y="957.5" font-size="16.5" font-weight="700" fill="#35353f" textLength="47.4" lengthAdjust="spacingAndGlyphs" stroke="#fbfaf7" stroke-width="2.5" paint-order="stroke" stroke-linejoin="round">ČESKO</text>
<text x="1126.8" y="957.5" font-size="16.5" font-weight="700" fill="#35353f" textLength="47.4" lengthAdjust="spacingAndGlyphs" stroke="#35353f" stroke-width="0.05">ČESKO</text>
<text x="1351" y="1029.4" font-size="14" font-weight="400" fill="#3d3d3d" textLength="22.4" lengthAdjust="spacingAndGlyphs" stroke="#fbfaf7" stroke-width="2.5" paint-order="stroke" stroke-linejoin="round">Zlín</text>
<text x="1351" y="1029.4" font-size="14" font-weight="400" fill="#3d3d3d" textLength="22.4" lengthAdjust="spacingAndGlyphs" stroke="#3d3d3d" stroke-width="0.35">Zlín</text>
<text x="1480.6" y="1097.4" font-size="16.5" font-weight="700" fill="#35353f" textLength="88.4" lengthAdjust="spacingAndGlyphs" stroke="#fbfaf7" stroke-width="2.5" paint-order="stroke" stroke-linejoin="round">SLOVENSKO</text>
<text x="1480.6" y="1097.4" font-size="16.5" font-weight="700" fill="#35353f" textLength="88.4" lengthAdjust="spacingAndGlyphs" stroke="#35353f" stroke-width="0.05">SLOVENSKO</text>
<text x="1134.8" y="1159.4" font-size="11" font-weight="400" fill="#7d5b65" textLength="108.6" lengthAdjust="spacingAndGlyphs" stroke="#fbfaf7" stroke-width="2.5" paint-order="stroke" stroke-linejoin="round">NIEDERÖSTERREICH</text>
<text x="1134.8" y="1159.4" font-size="11" font-weight="400" fill="#7d5b65" textLength="108.6" lengthAdjust="spacingAndGlyphs" stroke="#7d5b65" stroke-width="0.45">NIEDERÖSTERREICH</text>
<text x="1484.6" y="1228" font-size="14" font-weight="400" fill="#3d3d3d" textLength="22.0" lengthAdjust="spacingAndGlyphs" stroke="#fbfaf7" stroke-width="2.5" paint-order="stroke" stroke-linejoin="round">Vác</text>
<text x="1484.6" y="1228" font-size="14" font-weight="400" fill="#3d3d3d" textLength="22.0" lengthAdjust="spacingAndGlyphs" stroke="#3d3d3d" stroke-width="0.35">Vác</text>
<text x="817" y="1058.9" font-size="14" font-weight="400" fill="#3d3d3d" textLength="77.0" lengthAdjust="spacingAndGlyphs" stroke="#fbfaf7" stroke-width="2.5" paint-order="stroke" stroke-linejoin="round">Regensburg</text>
<text x="817" y="1058.9" font-size="14" font-weight="400" fill="#3d3d3d" textLength="77.0" lengthAdjust="spacingAndGlyphs" stroke="#3d3d3d" stroke-width="0.35">Regensburg</text>
<text x="651.5" y="1144.7" font-size="14" font-weight="400" fill="#3d3d3d" textLength="25.5" lengthAdjust="spacingAndGlyphs" stroke="#fbfaf7" stroke-width="2.5" paint-order="stroke" stroke-linejoin="round">Ulm</text>
<text x="651.5" y="1144.7" font-size="14" font-weight="400" fill="#3d3d3d" textLength="25.5" lengthAdjust="spacingAndGlyphs" stroke="#3d3d3d" stroke-width="0.35">Ulm</text>
<text x="958.5" y="1120.3" font-size="14" font-weight="400" fill="#4d4d4d" textLength="43.2" lengthAdjust="spacingAndGlyphs" stroke="#fbfaf7" stroke-width="2.5" paint-order="stroke" stroke-linejoin="round">Passau</text>
<text x="958.5" y="1120.3" font-size="14" font-weight="400" fill="#4d4d4d" textLength="43.2" lengthAdjust="spacingAndGlyphs" stroke="#4d4d4d" stroke-width="0.35">Passau</text>
<text x="1042" y="1156.8" font-size="14" font-weight="400" fill="#3d3d3d" textLength="26.0" lengthAdjust="spacingAndGlyphs" stroke="#fbfaf7" stroke-width="2.5" paint-order="stroke" stroke-linejoin="round">Linz</text>
<text x="1042" y="1156.8" font-size="14" font-weight="400" fill="#3d3d3d" textLength="26.0" lengthAdjust="spacingAndGlyphs" stroke="#3d3d3d" stroke-width="0.35">Linz</text>
<text x="823" y="1219" font-size="14" font-weight="400" fill="#4d4d4d" textLength="74.0" lengthAdjust="spacingAndGlyphs" stroke="#fbfaf7" stroke-width="2.5" paint-order="stroke" stroke-linejoin="round">Rosenheim</text>
<text x="823" y="1219" font-size="14" font-weight="400" fill="#4d4d4d" textLength="74.0" lengthAdjust="spacingAndGlyphs" stroke="#4d4d4d" stroke-width="0.35">Rosenheim</text>
<text x="560" y="1091.6" font-size="14" font-weight="400" fill="#3d3d3d" textLength="59.0" lengthAdjust="spacingAndGlyphs" stroke="#fbfaf7" stroke-width="2.5" paint-order="stroke" stroke-linejoin="round">Stuttgart</text>
<text x="560" y="1091.6" font-size="14" font-weight="400" fill="#3d3d3d" textLength="59.0" lengthAdjust="spacingAndGlyphs" stroke="#3d3d3d" stroke-width="0.35">Stuttgart</text>
<text x="520" y="1129" font-size="11" font-weight="400" fill="#7d5b65" textLength="99.0" lengthAdjust="spacingAndGlyphs" stroke="#fbfaf7" stroke-width="2.5" paint-order="stroke" stroke-linejoin="round">BADEN-WÜRTTEMBERG</text>
<text x="520" y="1129" font-size="11" font-weight="400" fill="#7d5b65" textLength="99.0" lengthAdjust="spacingAndGlyphs" stroke="#7d5b65" stroke-width="0.45">BADEN-WÜRTTEMBERG</text>
<circle cx="613.4" cy="728.3" r="17.4" fill="#ffffff" fill-opacity="0.55"/>
<circle cx="613.4" cy="728.3" r="16.5" fill="#5355ef"/>
<text x="610.20" y="733.0" font-size="12.8" fill="#dfe0f8" textLength="6.41" lengthAdjust="spacingAndGlyphs">5</text>
<circle cx="685.8" cy="679.2" r="22.2" fill="#ffffff" fill-opacity="0.55"/>
<circle cx="685.8" cy="679.2" r="21.3" fill="#5355ef"/>
<text x="679.39" y="683.9000000000001" font-size="12.8" fill="#dfe0f8" textLength="12.81" lengthAdjust="spacingAndGlyphs">16</text>
<circle cx="868.3" cy="725.5" r="22.099999999999998" fill="#ffffff" fill-opacity="0.55"/>
<circle cx="868.3" cy="725.5" r="21.2" fill="#5355ef"/>
<text x="861.89" y="730.2" font-size="12.8" fill="#dfe0f8" textLength="12.81" lengthAdjust="spacingAndGlyphs">59</text>
<circle cx="1058.7" cy="661.4" r="17.4" fill="#ffffff" fill-opacity="0.55"/>
<circle cx="1058.7" cy="661.4" r="16.5" fill="#5355ef"/>
<text x="1055.50" y="666.1" font-size="12.8" fill="#dfe0f8" textLength="6.41" lengthAdjust="spacingAndGlyphs">3</text>
<circle cx="1036.2" cy="739.4" r="17.4" fill="#ffffff" fill-opacity="0.55"/>
<circle cx="1036.2" cy="739.4" r="16.5" fill="#5355ef"/>
<text x="1033.00" y="744.1" font-size="12.8" fill="#dfe0f8" textLength="6.41" lengthAdjust="spacingAndGlyphs">3</text>
<circle cx="706.8" cy="774.9" r="17.4" fill="#ffffff" fill-opacity="0.55"/>
<circle cx="706.8" cy="774.9" r="16.5" fill="#5355ef"/>
<text x="703.60" y="779.6" font-size="12.8" fill="#dfe0f8" textLength="6.41" lengthAdjust="spacingAndGlyphs">3</text>
<circle cx="804.4" cy="774.9" r="17.4" fill="#ffffff" fill-opacity="0.55"/>
<circle cx="804.4" cy="774.9" r="16.5" fill="#5355ef"/>
<text x="801.20" y="779.6" font-size="12.8" fill="#dfe0f8" textLength="6.41" lengthAdjust="spacingAndGlyphs">3</text>
<circle cx="933.4" cy="794.6" r="22.2" fill="#ffffff" fill-opacity="0.55"/>
<circle cx="933.4" cy="794.6" r="21.3" fill="#5355ef"/>
<text x="926.99" y="799.3000000000001" font-size="12.8" fill="#dfe0f8" textLength="12.81" lengthAdjust="spacingAndGlyphs">36</text>
<circle cx="1119.7" cy="799.2" r="22.2" fill="#ffffff" fill-opacity="0.55"/>
<circle cx="1119.7" cy="799.2" r="21.3" fill="#5355ef"/>
<text x="1113.29" y="803.9000000000001" font-size="12.8" fill="#dfe0f8" textLength="12.81" lengthAdjust="spacingAndGlyphs">32</text>
<circle cx="1021" cy="831.6" r="22.2" fill="#ffffff" fill-opacity="0.55"/>
<circle cx="1021" cy="831.6" r="21.3" fill="#5355ef"/>
<text x="1014.59" y="836.3000000000001" font-size="12.8" fill="#dfe0f8" textLength="12.81" lengthAdjust="spacingAndGlyphs">40</text>
<circle cx="907.8" cy="878.4" r="22.2" fill="#ffffff" fill-opacity="0.55"/>
<circle cx="907.8" cy="878.4" r="21.3" fill="#5355ef"/>
<text x="901.39" y="883.1" font-size="12.8" fill="#dfe0f8" textLength="12.81" lengthAdjust="spacingAndGlyphs">29</text>
<circle cx="752.2" cy="882.9" r="17.4" fill="#ffffff" fill-opacity="0.55"/>
<circle cx="752.2" cy="882.9" r="16.5" fill="#5355ef"/>
<text x="749.00" y="887.6" font-size="12.8" fill="#dfe0f8" textLength="6.41" lengthAdjust="spacingAndGlyphs">6</text>
<circle cx="1069.8" cy="904.8" r="40.4" fill="#ffffff" fill-opacity="0.55"/>
<circle cx="1069.8" cy="904.8" r="39.5" fill="#5355ef"/>
<text x="1058.91" y="909.5" font-size="12.8" fill="#dfe0f8" textLength="21.77" lengthAdjust="spacingAndGlyphs">1.2k</text>
<circle cx="1200.3" cy="897.9" r="22.2" fill="#ffffff" fill-opacity="0.55"/>
<circle cx="1200.3" cy="897.9" r="21.3" fill="#5355ef"/>
<text x="1193.89" y="902.6" font-size="12.8" fill="#dfe0f8" textLength="12.81" lengthAdjust="spacingAndGlyphs">74</text>
<circle cx="1428.3" cy="945" r="30.099999999999998" fill="#ffffff" fill-opacity="0.55"/>
<circle cx="1428.3" cy="945" r="29.2" fill="#5355ef"/>
<text x="1418.69" y="949.7" font-size="12.8" fill="#dfe0f8" textLength="19.22" lengthAdjust="spacingAndGlyphs">335</text>
<circle cx="659.5" cy="935.6" r="17.4" fill="#ffffff" fill-opacity="0.55"/>
<circle cx="659.5" cy="935.6" r="16.5" fill="#5355ef"/>
<text x="656.30" y="940.3000000000001" font-size="12.8" fill="#dfe0f8" textLength="6.41" lengthAdjust="spacingAndGlyphs">7</text>
<circle cx="969.5" cy="958" r="22.2" fill="#ffffff" fill-opacity="0.55"/>
<circle cx="969.5" cy="958" r="21.3" fill="#5355ef"/>
<text x="963.09" y="962.7" font-size="12.8" fill="#dfe0f8" textLength="12.81" lengthAdjust="spacingAndGlyphs">45</text>
<circle cx="751" cy="985.7" r="22.2" fill="#ffffff" fill-opacity="0.55"/>
<circle cx="751" cy="985.7" r="21.3" fill="#5355ef"/>
<text x="744.59" y="990.4000000000001" font-size="12.8" fill="#dfe0f8" textLength="12.81" lengthAdjust="spacingAndGlyphs">54</text>
<circle cx="1183.9" cy="989.2" r="22.099999999999998" fill="#ffffff" fill-opacity="0.55"/>
<circle cx="1183.9" cy="989.2" r="21.2" fill="#5355ef"/>
<text x="1177.49" y="993.9000000000001" font-size="12.8" fill="#dfe0f8" textLength="12.81" lengthAdjust="spacingAndGlyphs">15</text>
<circle cx="849.4" cy="1016.5" r="22.2" fill="#ffffff" fill-opacity="0.55"/>
<circle cx="849.4" cy="1016.5" r="21.3" fill="#5355ef"/>
<text x="842.99" y="1021.2" font-size="12.8" fill="#dfe0f8" textLength="12.81" lengthAdjust="spacingAndGlyphs">13</text>
<circle cx="1288.7" cy="1011.9" r="30.2" fill="#ffffff" fill-opacity="0.55"/>
<circle cx="1288.7" cy="1011.9" r="29.3" fill="#5355ef"/>
<text x="1279.09" y="1016.6" font-size="12.8" fill="#dfe0f8" textLength="19.22" lengthAdjust="spacingAndGlyphs">188</text>
<circle cx="1065.5" cy="1048.7" r="22.2" fill="#ffffff" fill-opacity="0.55"/>
<circle cx="1065.5" cy="1048.7" r="21.3" fill="#5355ef"/>
<text x="1059.09" y="1053.4" font-size="12.8" fill="#dfe0f8" textLength="12.81" lengthAdjust="spacingAndGlyphs">39</text>
<circle cx="1267.5" cy="1071.4" r="22.2" fill="#ffffff" fill-opacity="0.55"/>
<circle cx="1267.5" cy="1071.4" r="21.3" fill="#5355ef"/>
<text x="1261.09" y="1076.1000000000001" font-size="12.8" fill="#dfe0f8" textLength="12.81" lengthAdjust="spacingAndGlyphs">13</text>
<circle cx="793.6" cy="1083.6" r="22.2" fill="#ffffff" fill-opacity="0.55"/>
<circle cx="793.6" cy="1083.6" r="21.3" fill="#5355ef"/>
<text x="787.19" y="1088.3" font-size="12.8" fill="#dfe0f8" textLength="12.81" lengthAdjust="spacingAndGlyphs">10</text>
<circle cx="666.5" cy="1095.4" r="22.2" fill="#ffffff" fill-opacity="0.55"/>
<circle cx="666.5" cy="1095.4" r="21.3" fill="#5355ef"/>
<text x="660.09" y="1100.1000000000001" font-size="12.8" fill="#dfe0f8" textLength="12.81" lengthAdjust="spacingAndGlyphs">29</text>
<circle cx="904.4" cy="1109.3" r="22.2" fill="#ffffff" fill-opacity="0.55"/>
<circle cx="904.4" cy="1109.3" r="21.3" fill="#5355ef"/>
<text x="897.99" y="1114.0" font-size="12.8" fill="#dfe0f8" textLength="12.81" lengthAdjust="spacingAndGlyphs">18</text>
<circle cx="1376" cy="1103" r="17.4" fill="#ffffff" fill-opacity="0.55"/>
<circle cx="1376" cy="1103" r="16.5" fill="#5355ef"/>
<text x="1372.80" y="1107.7" font-size="12.8" fill="#dfe0f8" textLength="6.41" lengthAdjust="spacingAndGlyphs">5</text>
<circle cx="1014.9" cy="1144.7" r="17.4" fill="#ffffff" fill-opacity="0.55"/>
<circle cx="1014.9" cy="1144.7" r="16.5" fill="#5355ef"/>
<text x="1011.70" y="1149.4" font-size="12.8" fill="#dfe0f8" textLength="6.41" lengthAdjust="spacingAndGlyphs">9</text>
<circle cx="1462.4" cy="1147.3" r="17.4" fill="#ffffff" fill-opacity="0.55"/>
<circle cx="1462.4" cy="1147.3" r="16.5" fill="#5355ef"/>
<text x="1459.20" y="1152.0" font-size="12.8" fill="#dfe0f8" textLength="6.41" lengthAdjust="spacingAndGlyphs">2</text>
<circle cx="679.4" cy="1168.9" r="22.2" fill="#ffffff" fill-opacity="0.55"/>
<circle cx="679.4" cy="1168.9" r="21.3" fill="#5355ef"/>
<text x="672.99" y="1173.6000000000001" font-size="12.8" fill="#dfe0f8" textLength="12.81" lengthAdjust="spacingAndGlyphs">14</text>
<circle cx="800.3" cy="1169.9" r="30.299999999999997" fill="#ffffff" fill-opacity="0.55"/>
<circle cx="800.3" cy="1169.9" r="29.4" fill="#5355ef"/>
<text x="790.69" y="1174.6000000000001" font-size="12.8" fill="#dfe0f8" textLength="19.22" lengthAdjust="spacingAndGlyphs">102</text>
<circle cx="1283.3" cy="1171.2" r="22.2" fill="#ffffff" fill-opacity="0.55"/>
<circle cx="1283.3" cy="1171.2" r="21.3" fill="#5355ef"/>
<text x="1276.89" y="1175.9" font-size="12.8" fill="#dfe0f8" textLength="12.81" lengthAdjust="spacingAndGlyphs">66</text>
<circle cx="907.6" cy="1213.6" r="21.9" fill="#ffffff" fill-opacity="0.55"/>
<circle cx="907.6" cy="1213.6" r="21" fill="#5355ef"/>
<text x="901.19" y="1218.3" font-size="12.8" fill="#dfe0f8" textLength="12.81" lengthAdjust="spacingAndGlyphs">15</text>
<circle cx="1311.3" cy="884.4" r="16.1" fill="#ffffff" fill-opacity="0.55"/>
<circle cx="1311.3" cy="884.4" r="15.2" fill="#5355ef"/>
<path d="M1303.7 881.5L1311.3 875.2L1318.9 881.5H1317.9V890.2H1313.7V884.9Q1313.7 882.8 1311.3 882.8Q1308.9 882.8 1308.9 884.9V890.2H1304.7V881.5Z" fill="#f4f6ff"/>
<circle cx="1476.3" cy="1046" r="16.1" fill="#ffffff" fill-opacity="0.55"/>
<circle cx="1476.3" cy="1046" r="15.2" fill="#5355ef"/>
<path d="M1468.7 1043.1L1476.3 1036.8L1483.9 1043.1H1482.9V1051.8H1478.7V1046.5Q1478.7 1044.4 1476.3 1044.4Q1473.9 1044.4 1473.9 1046.5V1051.8H1469.7V1043.1Z" fill="#f4f6ff"/>
<circle cx="1356.2" cy="1195" r="16.1" fill="#ffffff" fill-opacity="0.55"/>
<circle cx="1356.2" cy="1195" r="15.2" fill="#5355ef"/>
<path d="M1348.6 1192.1L1356.2 1185.8L1363.8 1192.1H1362.8V1200.8H1358.6V1195.5Q1358.6 1193.4 1356.2 1193.4Q1353.8 1193.4 1353.8 1195.5V1200.8H1349.6V1192.1Z" fill="#f4f6ff"/>
</svg></div>
<div id="brown"></div>
</body></html>
